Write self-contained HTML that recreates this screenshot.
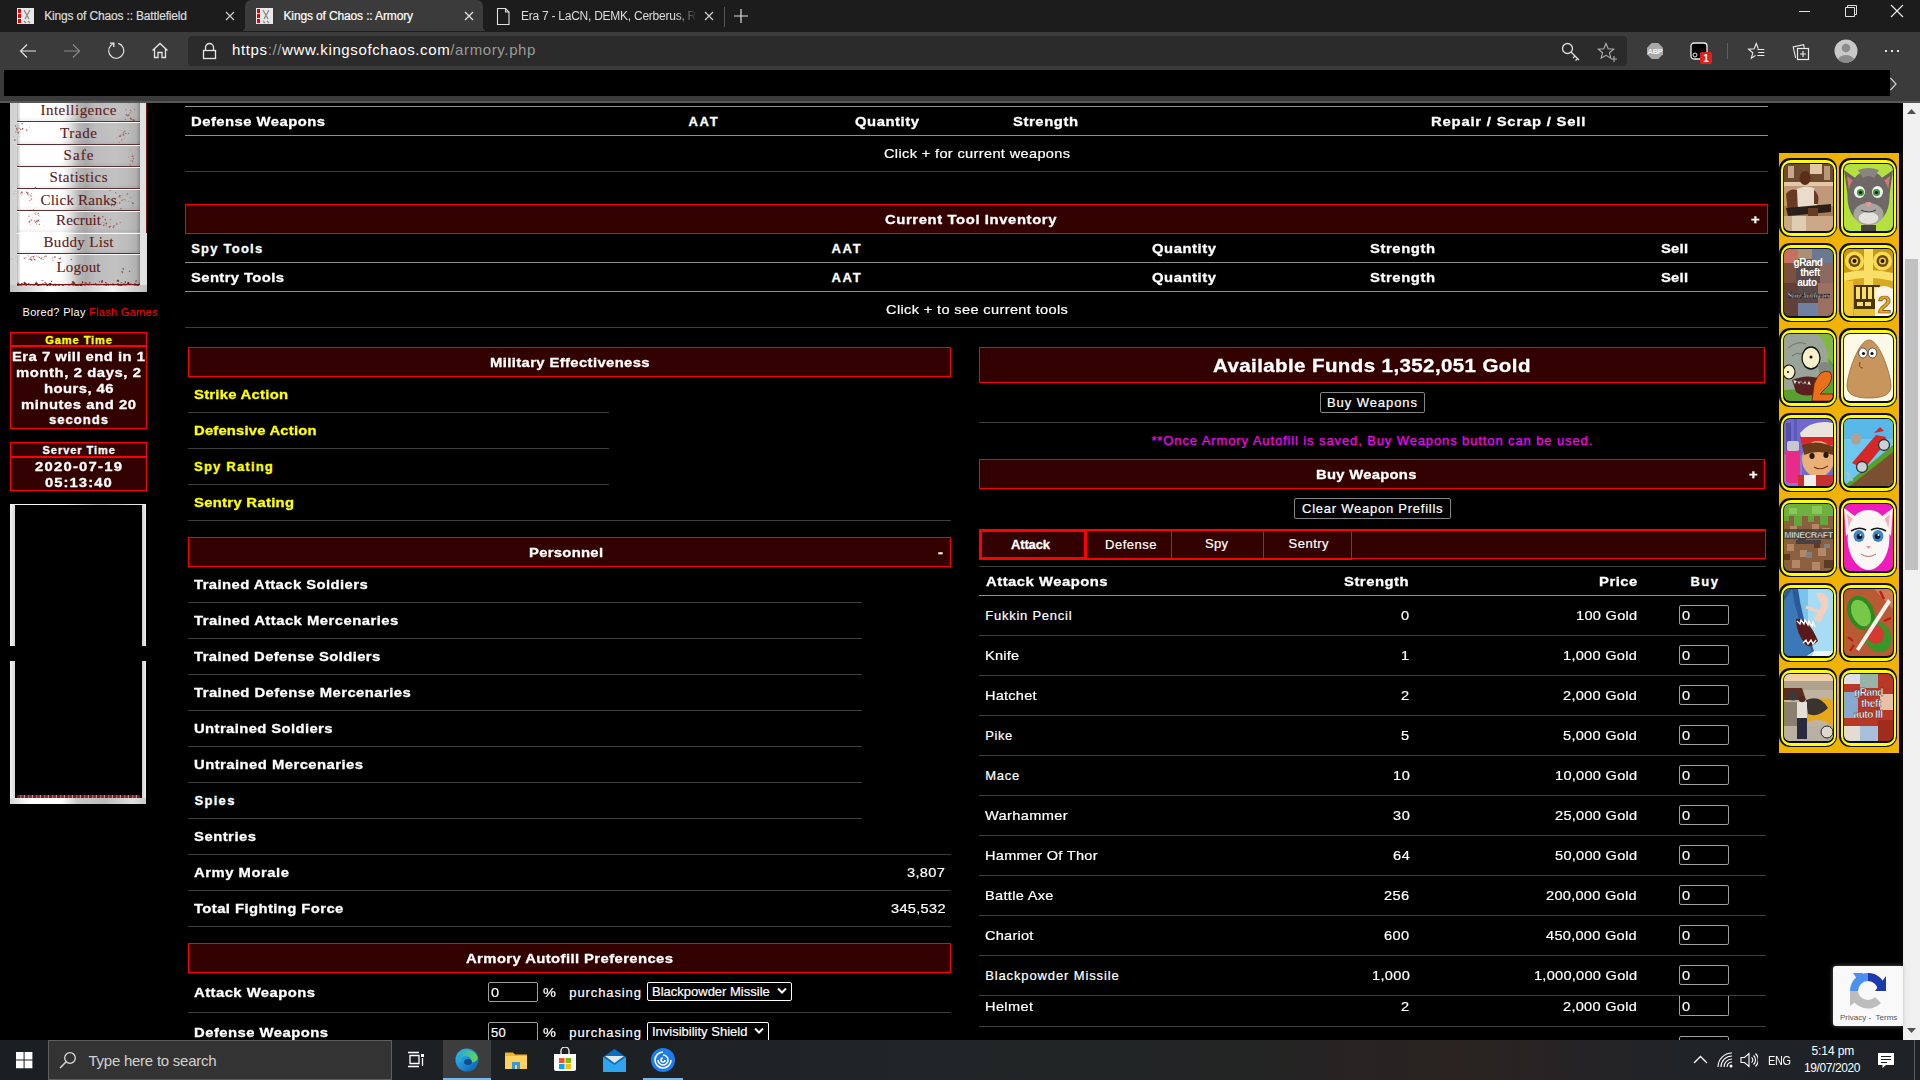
<!DOCTYPE html><html><head><meta charset="utf-8"><style>
html,body{margin:0;padding:0;width:1920px;height:1080px;overflow:hidden;background:#000}
body>div,body>svg{position:absolute}
body div div{position:absolute}
</style></head><body>
<div style="left:0px;top:103px;width:1903px;height:937px;background:#000"></div>
<div style="left:185px;top:106px;width:1583px;height:1px;background:#8f8f8f"></div>
<div style="left:191.0px;top:115px;font:bold 13px/13px 'Liberation Sans',sans-serif;color:#ffffff;letter-spacing:0.414px;white-space:nowrap;transform:scaleX(1.14);transform-origin:0 0;-webkit-text-stroke:0.3px #ffffff;">Defense Weapons</div>
<div style="left:688.4px;top:115px;font:bold 13px/13px 'Liberation Sans',sans-serif;color:#ffffff;letter-spacing:1.775px;white-space:nowrap;-webkit-text-stroke:0.3px #ffffff;">AAT</div>
<div style="left:855.4px;top:115px;font:bold 13px/13px 'Liberation Sans',sans-serif;color:#ffffff;letter-spacing:0.489px;white-space:nowrap;transform:scaleX(1.14);transform-origin:0 0;-webkit-text-stroke:0.3px #ffffff;">Quantity</div>
<div style="left:1013.1px;top:115px;font:bold 13px/13px 'Liberation Sans',sans-serif;color:#ffffff;letter-spacing:0.511px;white-space:nowrap;transform:scaleX(1.14);transform-origin:0 0;-webkit-text-stroke:0.3px #ffffff;">Strength</div>
<div style="left:1431.0px;top:115px;font:bold 13px/13px 'Liberation Sans',sans-serif;color:#ffffff;letter-spacing:0.702px;white-space:nowrap;transform:scaleX(1.14);transform-origin:0 0;-webkit-text-stroke:0.3px #ffffff;">Repair / Scrap / Sell</div>
<div style="left:185px;top:135px;width:1583px;height:1px;background:#8f8f8f"></div>
<div style="left:883.5px;top:147px;font:13px/13px 'Liberation Sans',sans-serif;color:#ffffff;letter-spacing:0.317px;white-space:nowrap;transform:scaleX(1.12);transform-origin:0 0;-webkit-text-stroke:0.2px #ffffff;">Click + for current weapons</div>
<div style="left:185px;top:171px;width:1583px;height:1px;background:#3f3f3f"></div>
<div style="left:185px;top:204px;width:1583px;height:30px;background:#330000;border:1px solid #ff0000;box-sizing:border-box"></div>
<div style="left:885.1px;top:213px;font:bold 13px/13px 'Liberation Sans',sans-serif;color:#ffffff;letter-spacing:0.534px;white-space:nowrap;transform:scaleX(1.14);transform-origin:0 0;-webkit-text-stroke:0.3px #ffffff;">Current Tool Inventory</div>
<div style="left:1751.0px;top:213px;font:bold 13px/13px 'Liberation Sans',sans-serif;color:#ffffff;letter-spacing:0.000px;white-space:nowrap;transform:scaleX(1.14);transform-origin:0 0;-webkit-text-stroke:0.3px #ffffff;">+</div>
<div style="left:191.2px;top:242px;font:bold 13px/13px 'Liberation Sans',sans-serif;color:#ffffff;letter-spacing:1.232px;white-space:nowrap;-webkit-text-stroke:0.3px #ffffff;">Spy Tools</div>
<div style="left:831.4px;top:242px;font:bold 13px/13px 'Liberation Sans',sans-serif;color:#ffffff;letter-spacing:1.775px;white-space:nowrap;-webkit-text-stroke:0.3px #ffffff;">AAT</div>
<div style="left:1151.7px;top:242px;font:bold 13px/13px 'Liberation Sans',sans-serif;color:#ffffff;letter-spacing:0.489px;white-space:nowrap;transform:scaleX(1.14);transform-origin:0 0;-webkit-text-stroke:0.3px #ffffff;">Quantity</div>
<div style="left:1369.6px;top:242px;font:bold 13px/13px 'Liberation Sans',sans-serif;color:#ffffff;letter-spacing:0.511px;white-space:nowrap;transform:scaleX(1.14);transform-origin:0 0;-webkit-text-stroke:0.3px #ffffff;">Strength</div>
<div style="left:1661.0px;top:242px;font:bold 13px/13px 'Liberation Sans',sans-serif;color:#ffffff;letter-spacing:0.186px;white-space:nowrap;transform:scaleX(1.14);transform-origin:0 0;-webkit-text-stroke:0.3px #ffffff;">Sell</div>
<div style="left:191.2px;top:271px;font:bold 13px/13px 'Liberation Sans',sans-serif;color:#ffffff;letter-spacing:0.347px;white-space:nowrap;transform:scaleX(1.14);transform-origin:0 0;-webkit-text-stroke:0.3px #ffffff;">Sentry Tools</div>
<div style="left:831.4px;top:271px;font:bold 13px/13px 'Liberation Sans',sans-serif;color:#ffffff;letter-spacing:1.775px;white-space:nowrap;-webkit-text-stroke:0.3px #ffffff;">AAT</div>
<div style="left:1151.7px;top:271px;font:bold 13px/13px 'Liberation Sans',sans-serif;color:#ffffff;letter-spacing:0.489px;white-space:nowrap;transform:scaleX(1.14);transform-origin:0 0;-webkit-text-stroke:0.3px #ffffff;">Quantity</div>
<div style="left:1369.6px;top:271px;font:bold 13px/13px 'Liberation Sans',sans-serif;color:#ffffff;letter-spacing:0.511px;white-space:nowrap;transform:scaleX(1.14);transform-origin:0 0;-webkit-text-stroke:0.3px #ffffff;">Strength</div>
<div style="left:1661.0px;top:271px;font:bold 13px/13px 'Liberation Sans',sans-serif;color:#ffffff;letter-spacing:0.186px;white-space:nowrap;transform:scaleX(1.14);transform-origin:0 0;-webkit-text-stroke:0.3px #ffffff;">Sell</div>
<div style="left:185px;top:262px;width:1583px;height:1px;background:#8f8f8f"></div>
<div style="left:185px;top:291px;width:1583px;height:1px;background:#8f8f8f"></div>
<div style="left:885.5px;top:303px;font:13px/13px 'Liberation Sans',sans-serif;color:#ffffff;letter-spacing:0.328px;white-space:nowrap;transform:scaleX(1.12);transform-origin:0 0;-webkit-text-stroke:0.2px #ffffff;">Click + to see current tools</div>
<div style="left:185px;top:327px;width:1583px;height:1px;background:#3f3f3f"></div>
<div style="left:188px;top:347px;width:763px;height:30px;background:#330000;border:1px solid #ff0000;box-sizing:border-box"></div>
<div style="left:489.8px;top:356px;font:bold 13px/13px 'Liberation Sans',sans-serif;color:#ffffff;letter-spacing:0.335px;white-space:nowrap;transform:scaleX(1.14);transform-origin:0 0;-webkit-text-stroke:0.3px #ffffff;">Military Effectiveness</div>
<div style="left:194.0px;top:388px;font:bold 13px/13px 'Liberation Sans',sans-serif;color:#ffff00;letter-spacing:0.229px;white-space:nowrap;transform:scaleX(1.14);transform-origin:0 0;-webkit-text-stroke:0.3px #ffff00;">Strike Action</div>
<div style="left:188px;top:412px;width:421px;height:1px;background:#3f3f3f"></div>
<div style="left:194.0px;top:424px;font:bold 13px/13px 'Liberation Sans',sans-serif;color:#ffff00;letter-spacing:0.164px;white-space:nowrap;transform:scaleX(1.14);transform-origin:0 0;-webkit-text-stroke:0.3px #ffff00;">Defensive Action</div>
<div style="left:188px;top:448px;width:421px;height:1px;background:#3f3f3f"></div>
<div style="left:194.0px;top:460px;font:bold 13px/13px 'Liberation Sans',sans-serif;color:#ffff00;letter-spacing:1.212px;white-space:nowrap;-webkit-text-stroke:0.3px #ffff00;">Spy Rating</div>
<div style="left:188px;top:484px;width:421px;height:1px;background:#3f3f3f"></div>
<div style="left:194.0px;top:496px;font:bold 13px/13px 'Liberation Sans',sans-serif;color:#ffff00;letter-spacing:0.267px;white-space:nowrap;transform:scaleX(1.14);transform-origin:0 0;-webkit-text-stroke:0.3px #ffff00;">Sentry Rating</div>
<div style="left:188px;top:520px;width:763px;height:1px;background:#3f3f3f"></div>
<div style="left:188px;top:537px;width:763px;height:30px;background:#330000;border:1px solid #ff0000;box-sizing:border-box"></div>
<div style="left:529.0px;top:546px;font:bold 13px/13px 'Liberation Sans',sans-serif;color:#ffffff;letter-spacing:0.257px;white-space:nowrap;transform:scaleX(1.14);transform-origin:0 0;-webkit-text-stroke:0.3px #ffffff;">Personnel</div>
<div style="left:937.5px;top:546px;font:bold 13px/13px 'Liberation Sans',sans-serif;color:#ffffff;letter-spacing:0.000px;white-space:nowrap;transform:scaleX(1.14);transform-origin:0 0;-webkit-text-stroke:0.3px #ffffff;">-</div>
<div style="left:194.4px;top:578px;font:bold 13px/13px 'Liberation Sans',sans-serif;color:#ffffff;letter-spacing:0.380px;white-space:nowrap;transform:scaleX(1.14);transform-origin:0 0;-webkit-text-stroke:0.3px #ffffff;">Trained Attack Soldiers</div>
<div style="left:188px;top:602px;width:674px;height:1px;background:#3f3f3f"></div>
<div style="left:194.4px;top:614px;font:bold 13px/13px 'Liberation Sans',sans-serif;color:#ffffff;letter-spacing:0.423px;white-space:nowrap;transform:scaleX(1.14);transform-origin:0 0;-webkit-text-stroke:0.3px #ffffff;">Trained Attack Mercenaries</div>
<div style="left:188px;top:638px;width:674px;height:1px;background:#3f3f3f"></div>
<div style="left:194.4px;top:650px;font:bold 13px/13px 'Liberation Sans',sans-serif;color:#ffffff;letter-spacing:0.351px;white-space:nowrap;transform:scaleX(1.14);transform-origin:0 0;-webkit-text-stroke:0.3px #ffffff;">Trained Defense Soldiers</div>
<div style="left:188px;top:674px;width:674px;height:1px;background:#3f3f3f"></div>
<div style="left:194.4px;top:686px;font:bold 13px/13px 'Liberation Sans',sans-serif;color:#ffffff;letter-spacing:0.390px;white-space:nowrap;transform:scaleX(1.14);transform-origin:0 0;-webkit-text-stroke:0.3px #ffffff;">Trained Defense Mercenaries</div>
<div style="left:188px;top:710px;width:674px;height:1px;background:#3f3f3f"></div>
<div style="left:194.4px;top:722px;font:bold 13px/13px 'Liberation Sans',sans-serif;color:#ffffff;letter-spacing:0.348px;white-space:nowrap;transform:scaleX(1.14);transform-origin:0 0;-webkit-text-stroke:0.3px #ffffff;">Untrained Soldiers</div>
<div style="left:188px;top:746px;width:674px;height:1px;background:#3f3f3f"></div>
<div style="left:194.4px;top:758px;font:bold 13px/13px 'Liberation Sans',sans-serif;color:#ffffff;letter-spacing:0.407px;white-space:nowrap;transform:scaleX(1.14);transform-origin:0 0;-webkit-text-stroke:0.3px #ffffff;">Untrained Mercenaries</div>
<div style="left:188px;top:782px;width:674px;height:1px;background:#3f3f3f"></div>
<div style="left:194.4px;top:794px;font:bold 13px/13px 'Liberation Sans',sans-serif;color:#ffffff;letter-spacing:1.328px;white-space:nowrap;-webkit-text-stroke:0.3px #ffffff;">Spies</div>
<div style="left:188px;top:818px;width:674px;height:1px;background:#3f3f3f"></div>
<div style="left:194.4px;top:830px;font:bold 13px/13px 'Liberation Sans',sans-serif;color:#ffffff;letter-spacing:0.439px;white-space:nowrap;transform:scaleX(1.14);transform-origin:0 0;-webkit-text-stroke:0.3px #ffffff;">Sentries</div>
<div style="left:188px;top:854px;width:763px;height:1px;background:#3f3f3f"></div>
<div style="left:194.4px;top:866px;font:bold 13px/13px 'Liberation Sans',sans-serif;color:#ffffff;letter-spacing:0.457px;white-space:nowrap;transform:scaleX(1.14);transform-origin:0 0;-webkit-text-stroke:0.3px #ffffff;">Army Morale</div>
<div style="left:188px;top:890px;width:763px;height:1px;background:#3f3f3f"></div>
<div style="left:194.4px;top:902px;font:bold 13px/13px 'Liberation Sans',sans-serif;color:#ffffff;letter-spacing:0.370px;white-space:nowrap;transform:scaleX(1.14);transform-origin:0 0;-webkit-text-stroke:0.3px #ffffff;">Total Fighting Force</div>
<div style="left:188px;top:926px;width:763px;height:1px;background:#3f3f3f"></div>
<div style="left:907.2px;top:866px;font:13px/13px 'Liberation Sans',sans-serif;color:#ffffff;letter-spacing:0.291px;white-space:nowrap;transform:scaleX(1.12);transform-origin:0 0;-webkit-text-stroke:0.2px #ffffff;">3,807</div>
<div style="left:890.5px;top:902px;font:13px/13px 'Liberation Sans',sans-serif;color:#ffffff;letter-spacing:0.280px;white-space:nowrap;transform:scaleX(1.12);transform-origin:0 0;-webkit-text-stroke:0.2px #ffffff;">345,532</div>
<div style="left:188px;top:943px;width:763px;height:30px;background:#330000;border:1px solid #ff0000;box-sizing:border-box"></div>
<div style="left:466.0px;top:952px;font:bold 13px/13px 'Liberation Sans',sans-serif;color:#ffffff;letter-spacing:0.361px;white-space:nowrap;transform:scaleX(1.14);transform-origin:0 0;-webkit-text-stroke:0.3px #ffffff;">Armory Autofill Preferences</div>
<div style="left:194.0px;top:986px;font:bold 13px/13px 'Liberation Sans',sans-serif;color:#ffffff;letter-spacing:0.403px;white-space:nowrap;transform:scaleX(1.14);transform-origin:0 0;-webkit-text-stroke:0.3px #ffffff;">Attack Weapons</div>
<div style="left:488px;top:982px;width:50px;height:20px;background:#000;border:1px solid #a0a0a0;border-radius:2px;box-sizing:border-box"></div>
<div style="left:491.0px;top:986px;font:13px/13px 'Liberation Sans',sans-serif;color:#ffffff;letter-spacing:0.000px;white-space:nowrap;transform:scaleX(1.12);transform-origin:0 0;-webkit-text-stroke:0.2px #ffffff;">0</div>
<div style="left:543.0px;top:986px;font:13px/13px 'Liberation Sans',sans-serif;color:#ffffff;letter-spacing:0.000px;white-space:nowrap;transform:scaleX(1.12);transform-origin:0 0;-webkit-text-stroke:0.2px #ffffff;">%</div>
<div style="left:569.3px;top:986px;font:13px/13px 'Liberation Sans',sans-serif;color:#ffffff;letter-spacing:0.897px;white-space:nowrap;-webkit-text-stroke:0.2px #ffffff;">purchasing</div>
<div style="left:647px;top:982px;width:145px;height:19px;background:#000;border:1px solid #fff;border-radius:2px;box-sizing:border-box"></div>
<div style="left:652.0px;top:985px;font:13px/13px 'Liberation Sans',sans-serif;color:#ffffff;letter-spacing:0.000px;white-space:nowrap;-webkit-text-stroke:0.2px #ffffff;">Blackpowder Missile</div>
<svg style="left:777px;top:987px" width="10" height="8"><path d="M1 1.5 L5 5.5 L9 1.5" stroke="#fff" stroke-width="2" fill="none"/></svg>
<div style="left:188px;top:1012px;width:763px;height:1px;background:#3f3f3f"></div>
<div style="left:194.0px;top:1026px;font:bold 13px/13px 'Liberation Sans',sans-serif;color:#ffffff;letter-spacing:0.414px;white-space:nowrap;transform:scaleX(1.14);transform-origin:0 0;-webkit-text-stroke:0.3px #ffffff;">Defense Weapons</div>
<div style="left:488px;top:1022px;width:50px;height:24px;background:#000;border:1px solid #a0a0a0;border-radius:2px;box-sizing:border-box"></div>
<div style="left:491.0px;top:1026px;font:13px/13px 'Liberation Sans',sans-serif;color:#ffffff;letter-spacing:0.289px;white-space:nowrap;-webkit-text-stroke:0.2px #ffffff;">50</div>
<div style="left:543.0px;top:1026px;font:13px/13px 'Liberation Sans',sans-serif;color:#ffffff;letter-spacing:0.000px;white-space:nowrap;transform:scaleX(1.12);transform-origin:0 0;-webkit-text-stroke:0.2px #ffffff;">%</div>
<div style="left:569.3px;top:1026px;font:13px/13px 'Liberation Sans',sans-serif;color:#ffffff;letter-spacing:0.897px;white-space:nowrap;-webkit-text-stroke:0.2px #ffffff;">purchasing</div>
<div style="left:647px;top:1022px;width:122px;height:30px;background:#000;border:1px solid #fff;border-radius:2px;box-sizing:border-box"></div>
<div style="left:652.0px;top:1025px;font:13px/13px 'Liberation Sans',sans-serif;color:#ffffff;letter-spacing:0.000px;white-space:nowrap;-webkit-text-stroke:0.2px #ffffff;">Invisibility Shield</div>
<svg style="left:754px;top:1027px" width="10" height="8"><path d="M1 1.5 L5 5.5 L9 1.5" stroke="#fff" stroke-width="2" fill="none"/></svg>
<div style="left:979px;top:347px;width:786px;height:36px;background:#330000;border:1px solid #ff0000;box-sizing:border-box"></div>
<div style="left:1213.3px;top:356.5px;font:bold 18px/18px 'Liberation Sans',sans-serif;color:#ffffff;letter-spacing:0.345px;white-space:nowrap;transform:scaleX(1.14);transform-origin:0 0;-webkit-text-stroke:0.3px #ffffff;">Available Funds 1,352,051 Gold</div>
<div style="left:1320px;top:392px;width:105px;height:21px;background:#000;border:1px solid #858585;border-radius:2px;box-sizing:border-box"></div>
<div style="left:1327.0px;top:396px;font:13px/13px 'Liberation Sans',sans-serif;color:#ffffff;letter-spacing:0.928px;white-space:nowrap;-webkit-text-stroke:0.2px #ffffff;">Buy Weapons</div>
<div style="left:979px;top:422px;width:786px;height:1px;background:#3f3f3f"></div>
<div style="left:1151.4px;top:434px;font:13px/13px 'Liberation Sans',sans-serif;color:#ff00ff;letter-spacing:0.889px;white-space:nowrap;-webkit-text-stroke:0.2px #ff00ff;">**Once Armory Autofill is saved, Buy Weapons button can be used.</div>
<div style="left:979px;top:459px;width:786px;height:30px;background:#330000;border:1px solid #ff0000;box-sizing:border-box"></div>
<div style="left:1316.0px;top:467.5px;font:bold 13px/13px 'Liberation Sans',sans-serif;color:#ffffff;letter-spacing:0.235px;white-space:nowrap;transform:scaleX(1.14);transform-origin:0 0;-webkit-text-stroke:0.3px #ffffff;">Buy Weapons</div>
<div style="left:1749.0px;top:467.5px;font:bold 13px/13px 'Liberation Sans',sans-serif;color:#ffffff;letter-spacing:0.000px;white-space:nowrap;transform:scaleX(1.14);transform-origin:0 0;-webkit-text-stroke:0.3px #ffffff;">+</div>
<div style="left:1294px;top:498px;width:157px;height:21px;background:#000;border:1px solid #858585;border-radius:2px;box-sizing:border-box"></div>
<div style="left:1302.0px;top:502px;font:13px/13px 'Liberation Sans',sans-serif;color:#ffffff;letter-spacing:0.754px;white-space:nowrap;-webkit-text-stroke:0.2px #ffffff;">Clear Weapon Prefills</div>
<div style="left:979px;top:529px;width:787px;height:30px;background:#330000;border:1px solid #ff0000;box-sizing:border-box"></div>
<div style="left:1086px;top:559px;width:266px;height:1px;background:#ff0000"></div>
<div style="left:979px;top:529px;width:108px;height:31px;border:3px solid #ff0000;box-sizing:border-box"></div>
<div style="left:1086px;top:530px;width:86px;height:30px;border-right:1px solid #ff0000;box-sizing:border-box"></div>
<div style="left:1171px;top:530px;width:93px;height:30px;border-right:1px solid #ff0000;box-sizing:border-box"></div>
<div style="left:1264px;top:530px;width:88px;height:30px;border-right:1px solid #ff0000;border-bottom:1px solid #ff0000;box-sizing:border-box"></div>
<div style="left:1086px;top:530px;width:680px;height:1px;background:#ff0000"></div>
<div style="left:1011.0px;top:538px;font:bold 13px/13px 'Liberation Sans',sans-serif;color:#ffffff;letter-spacing:-0.150px;white-space:nowrap;-webkit-text-stroke:0.3px #ffffff;">Attack</div>
<div style="left:1105.0px;top:538px;font:13px/13px 'Liberation Sans',sans-serif;color:#ffffff;letter-spacing:0.510px;white-space:nowrap;-webkit-text-stroke:0.2px #ffffff;">Defense</div>
<div style="left:1205.0px;top:537px;font:13px/13px 'Liberation Sans',sans-serif;color:#ffffff;letter-spacing:0.297px;white-space:nowrap;-webkit-text-stroke:0.2px #ffffff;">Spy</div>
<div style="left:1288.6px;top:537px;font:13px/13px 'Liberation Sans',sans-serif;color:#ffffff;letter-spacing:0.484px;white-space:nowrap;-webkit-text-stroke:0.2px #ffffff;">Sentry</div>
<div style="left:979px;top:566px;width:787px;height:1px;background:#3f3f3f"></div>
<div style="left:985.6px;top:575px;font:bold 13px/13px 'Liberation Sans',sans-serif;color:#ffffff;letter-spacing:0.443px;white-space:nowrap;transform:scaleX(1.14);transform-origin:0 0;-webkit-text-stroke:0.3px #ffffff;">Attack Weapons</div>
<div style="left:1343.8px;top:575px;font:bold 13px/13px 'Liberation Sans',sans-serif;color:#ffffff;letter-spacing:0.461px;white-space:nowrap;transform:scaleX(1.14);transform-origin:0 0;-webkit-text-stroke:0.3px #ffffff;">Strength</div>
<div style="left:1598.7px;top:575px;font:bold 13px/13px 'Liberation Sans',sans-serif;color:#ffffff;letter-spacing:0.453px;white-space:nowrap;transform:scaleX(1.14);transform-origin:0 0;-webkit-text-stroke:0.3px #ffffff;">Price</div>
<div style="left:1690.5px;top:575px;font:bold 13px/13px 'Liberation Sans',sans-serif;color:#ffffff;letter-spacing:1.469px;white-space:nowrap;-webkit-text-stroke:0.3px #ffffff;">Buy</div>
<div style="left:979px;top:595px;width:787px;height:1px;background:#8f8f8f"></div>
<div style="left:985.2px;top:609px;font:13px/13px 'Liberation Sans',sans-serif;color:#ffffff;letter-spacing:0.764px;white-space:nowrap;-webkit-text-stroke:0.2px #ffffff;">Fukkin Pencil</div>
<div style="left:1401.0px;top:609px;font:13px/13px 'Liberation Sans',sans-serif;color:#ffffff;letter-spacing:0.000px;white-space:nowrap;transform:scaleX(1.12);transform-origin:0 0;-webkit-text-stroke:0.2px #ffffff;">0</div>
<div style="left:1575.8px;top:609px;font:13px/13px 'Liberation Sans',sans-serif;color:#ffffff;letter-spacing:0.269px;white-space:nowrap;transform:scaleX(1.12);transform-origin:0 0;-webkit-text-stroke:0.2px #ffffff;">100 Gold</div>
<div style="left:1679px;top:605px;width:50px;height:20px;background:#000;border:1px solid #a0a0a0;border-radius:2px;box-sizing:border-box"></div>
<div style="left:1682.0px;top:609px;font:13px/13px 'Liberation Sans',sans-serif;color:#ffffff;letter-spacing:0.000px;white-space:nowrap;transform:scaleX(1.12);transform-origin:0 0;-webkit-text-stroke:0.2px #ffffff;">0</div>
<div style="left:979px;top:635px;width:787px;height:1px;background:#3f3f3f"></div>
<div style="left:985.2px;top:649px;font:13px/13px 'Liberation Sans',sans-serif;color:#ffffff;letter-spacing:0.179px;white-space:nowrap;transform:scaleX(1.12);transform-origin:0 0;-webkit-text-stroke:0.2px #ffffff;">Knife</div>
<div style="left:1401.0px;top:649px;font:13px/13px 'Liberation Sans',sans-serif;color:#ffffff;letter-spacing:0.000px;white-space:nowrap;transform:scaleX(1.12);transform-origin:0 0;-webkit-text-stroke:0.2px #ffffff;">1</div>
<div style="left:1563.2px;top:649px;font:13px/13px 'Liberation Sans',sans-serif;color:#ffffff;letter-spacing:0.252px;white-space:nowrap;transform:scaleX(1.12);transform-origin:0 0;-webkit-text-stroke:0.2px #ffffff;">1,000 Gold</div>
<div style="left:1679px;top:645px;width:50px;height:20px;background:#000;border:1px solid #a0a0a0;border-radius:2px;box-sizing:border-box"></div>
<div style="left:1682.0px;top:649px;font:13px/13px 'Liberation Sans',sans-serif;color:#ffffff;letter-spacing:0.000px;white-space:nowrap;transform:scaleX(1.12);transform-origin:0 0;-webkit-text-stroke:0.2px #ffffff;">0</div>
<div style="left:979px;top:675px;width:787px;height:1px;background:#3f3f3f"></div>
<div style="left:985.2px;top:689px;font:13px/13px 'Liberation Sans',sans-serif;color:#ffffff;letter-spacing:0.195px;white-space:nowrap;transform:scaleX(1.12);transform-origin:0 0;-webkit-text-stroke:0.2px #ffffff;">Hatchet</div>
<div style="left:1401.0px;top:689px;font:13px/13px 'Liberation Sans',sans-serif;color:#ffffff;letter-spacing:0.000px;white-space:nowrap;transform:scaleX(1.12);transform-origin:0 0;-webkit-text-stroke:0.2px #ffffff;">2</div>
<div style="left:1563.2px;top:689px;font:13px/13px 'Liberation Sans',sans-serif;color:#ffffff;letter-spacing:0.252px;white-space:nowrap;transform:scaleX(1.12);transform-origin:0 0;-webkit-text-stroke:0.2px #ffffff;">2,000 Gold</div>
<div style="left:1679px;top:685px;width:50px;height:20px;background:#000;border:1px solid #a0a0a0;border-radius:2px;box-sizing:border-box"></div>
<div style="left:1682.0px;top:689px;font:13px/13px 'Liberation Sans',sans-serif;color:#ffffff;letter-spacing:0.000px;white-space:nowrap;transform:scaleX(1.12);transform-origin:0 0;-webkit-text-stroke:0.2px #ffffff;">0</div>
<div style="left:979px;top:715px;width:787px;height:1px;background:#3f3f3f"></div>
<div style="left:985.2px;top:729px;font:13px/13px 'Liberation Sans',sans-serif;color:#ffffff;letter-spacing:0.568px;white-space:nowrap;-webkit-text-stroke:0.2px #ffffff;">Pike</div>
<div style="left:1401.0px;top:729px;font:13px/13px 'Liberation Sans',sans-serif;color:#ffffff;letter-spacing:0.000px;white-space:nowrap;transform:scaleX(1.12);transform-origin:0 0;-webkit-text-stroke:0.2px #ffffff;">5</div>
<div style="left:1563.2px;top:729px;font:13px/13px 'Liberation Sans',sans-serif;color:#ffffff;letter-spacing:0.252px;white-space:nowrap;transform:scaleX(1.12);transform-origin:0 0;-webkit-text-stroke:0.2px #ffffff;">5,000 Gold</div>
<div style="left:1679px;top:725px;width:50px;height:20px;background:#000;border:1px solid #a0a0a0;border-radius:2px;box-sizing:border-box"></div>
<div style="left:1682.0px;top:729px;font:13px/13px 'Liberation Sans',sans-serif;color:#ffffff;letter-spacing:0.000px;white-space:nowrap;transform:scaleX(1.12);transform-origin:0 0;-webkit-text-stroke:0.2px #ffffff;">0</div>
<div style="left:979px;top:755px;width:787px;height:1px;background:#3f3f3f"></div>
<div style="left:985.2px;top:769px;font:13px/13px 'Liberation Sans',sans-serif;color:#ffffff;letter-spacing:0.734px;white-space:nowrap;-webkit-text-stroke:0.2px #ffffff;">Mace</div>
<div style="left:1392.6px;top:769px;font:13px/13px 'Liberation Sans',sans-serif;color:#ffffff;letter-spacing:0.517px;white-space:nowrap;transform:scaleX(1.12);transform-origin:0 0;-webkit-text-stroke:0.2px #ffffff;">10</div>
<div style="left:1554.8px;top:769px;font:13px/13px 'Liberation Sans',sans-serif;color:#ffffff;letter-spacing:0.253px;white-space:nowrap;transform:scaleX(1.12);transform-origin:0 0;-webkit-text-stroke:0.2px #ffffff;">10,000 Gold</div>
<div style="left:1679px;top:765px;width:50px;height:20px;background:#000;border:1px solid #a0a0a0;border-radius:2px;box-sizing:border-box"></div>
<div style="left:1682.0px;top:769px;font:13px/13px 'Liberation Sans',sans-serif;color:#ffffff;letter-spacing:0.000px;white-space:nowrap;transform:scaleX(1.12);transform-origin:0 0;-webkit-text-stroke:0.2px #ffffff;">0</div>
<div style="left:979px;top:795px;width:787px;height:1px;background:#3f3f3f"></div>
<div style="left:985.2px;top:809px;font:13px/13px 'Liberation Sans',sans-serif;color:#ffffff;letter-spacing:0.329px;white-space:nowrap;transform:scaleX(1.12);transform-origin:0 0;-webkit-text-stroke:0.2px #ffffff;">Warhammer</div>
<div style="left:1392.6px;top:809px;font:13px/13px 'Liberation Sans',sans-serif;color:#ffffff;letter-spacing:0.517px;white-space:nowrap;transform:scaleX(1.12);transform-origin:0 0;-webkit-text-stroke:0.2px #ffffff;">30</div>
<div style="left:1554.8px;top:809px;font:13px/13px 'Liberation Sans',sans-serif;color:#ffffff;letter-spacing:0.253px;white-space:nowrap;transform:scaleX(1.12);transform-origin:0 0;-webkit-text-stroke:0.2px #ffffff;">25,000 Gold</div>
<div style="left:1679px;top:805px;width:50px;height:20px;background:#000;border:1px solid #a0a0a0;border-radius:2px;box-sizing:border-box"></div>
<div style="left:1682.0px;top:809px;font:13px/13px 'Liberation Sans',sans-serif;color:#ffffff;letter-spacing:0.000px;white-space:nowrap;transform:scaleX(1.12);transform-origin:0 0;-webkit-text-stroke:0.2px #ffffff;">0</div>
<div style="left:979px;top:835px;width:787px;height:1px;background:#3f3f3f"></div>
<div style="left:985.2px;top:849px;font:13px/13px 'Liberation Sans',sans-serif;color:#ffffff;letter-spacing:0.243px;white-space:nowrap;transform:scaleX(1.12);transform-origin:0 0;-webkit-text-stroke:0.2px #ffffff;">Hammer Of Thor</div>
<div style="left:1392.6px;top:849px;font:13px/13px 'Liberation Sans',sans-serif;color:#ffffff;letter-spacing:0.517px;white-space:nowrap;transform:scaleX(1.12);transform-origin:0 0;-webkit-text-stroke:0.2px #ffffff;">64</div>
<div style="left:1554.8px;top:849px;font:13px/13px 'Liberation Sans',sans-serif;color:#ffffff;letter-spacing:0.253px;white-space:nowrap;transform:scaleX(1.12);transform-origin:0 0;-webkit-text-stroke:0.2px #ffffff;">50,000 Gold</div>
<div style="left:1679px;top:845px;width:50px;height:20px;background:#000;border:1px solid #a0a0a0;border-radius:2px;box-sizing:border-box"></div>
<div style="left:1682.0px;top:849px;font:13px/13px 'Liberation Sans',sans-serif;color:#ffffff;letter-spacing:0.000px;white-space:nowrap;transform:scaleX(1.12);transform-origin:0 0;-webkit-text-stroke:0.2px #ffffff;">0</div>
<div style="left:979px;top:875px;width:787px;height:1px;background:#3f3f3f"></div>
<div style="left:985.2px;top:889px;font:13px/13px 'Liberation Sans',sans-serif;color:#ffffff;letter-spacing:0.281px;white-space:nowrap;transform:scaleX(1.12);transform-origin:0 0;-webkit-text-stroke:0.2px #ffffff;">Battle Axe</div>
<div style="left:1384.2px;top:889px;font:13px/13px 'Liberation Sans',sans-serif;color:#ffffff;letter-spacing:0.388px;white-space:nowrap;transform:scaleX(1.12);transform-origin:0 0;-webkit-text-stroke:0.2px #ffffff;">256</div>
<div style="left:1546.4px;top:889px;font:13px/13px 'Liberation Sans',sans-serif;color:#ffffff;letter-spacing:0.254px;white-space:nowrap;transform:scaleX(1.12);transform-origin:0 0;-webkit-text-stroke:0.2px #ffffff;">200,000 Gold</div>
<div style="left:1679px;top:885px;width:50px;height:20px;background:#000;border:1px solid #a0a0a0;border-radius:2px;box-sizing:border-box"></div>
<div style="left:1682.0px;top:889px;font:13px/13px 'Liberation Sans',sans-serif;color:#ffffff;letter-spacing:0.000px;white-space:nowrap;transform:scaleX(1.12);transform-origin:0 0;-webkit-text-stroke:0.2px #ffffff;">0</div>
<div style="left:979px;top:915px;width:787px;height:1px;background:#3f3f3f"></div>
<div style="left:985.2px;top:929px;font:13px/13px 'Liberation Sans',sans-serif;color:#ffffff;letter-spacing:0.215px;white-space:nowrap;transform:scaleX(1.12);transform-origin:0 0;-webkit-text-stroke:0.2px #ffffff;">Chariot</div>
<div style="left:1384.2px;top:929px;font:13px/13px 'Liberation Sans',sans-serif;color:#ffffff;letter-spacing:0.388px;white-space:nowrap;transform:scaleX(1.12);transform-origin:0 0;-webkit-text-stroke:0.2px #ffffff;">600</div>
<div style="left:1546.4px;top:929px;font:13px/13px 'Liberation Sans',sans-serif;color:#ffffff;letter-spacing:0.254px;white-space:nowrap;transform:scaleX(1.12);transform-origin:0 0;-webkit-text-stroke:0.2px #ffffff;">450,000 Gold</div>
<div style="left:1679px;top:925px;width:50px;height:20px;background:#000;border:1px solid #a0a0a0;border-radius:2px;box-sizing:border-box"></div>
<div style="left:1682.0px;top:929px;font:13px/13px 'Liberation Sans',sans-serif;color:#ffffff;letter-spacing:0.000px;white-space:nowrap;transform:scaleX(1.12);transform-origin:0 0;-webkit-text-stroke:0.2px #ffffff;">0</div>
<div style="left:979px;top:955px;width:787px;height:1px;background:#3f3f3f"></div>
<div style="left:985.2px;top:969px;font:13px/13px 'Liberation Sans',sans-serif;color:#ffffff;letter-spacing:0.872px;white-space:nowrap;-webkit-text-stroke:0.2px #ffffff;">Blackpowder Missile</div>
<div style="left:1371.6px;top:969px;font:13px/13px 'Liberation Sans',sans-serif;color:#ffffff;letter-spacing:0.291px;white-space:nowrap;transform:scaleX(1.12);transform-origin:0 0;-webkit-text-stroke:0.2px #ffffff;">1,000</div>
<div style="left:1533.8px;top:969px;font:13px/13px 'Liberation Sans',sans-serif;color:#ffffff;letter-spacing:0.244px;white-space:nowrap;transform:scaleX(1.12);transform-origin:0 0;-webkit-text-stroke:0.2px #ffffff;">1,000,000 Gold</div>
<div style="left:1679px;top:965px;width:50px;height:20px;background:#000;border:1px solid #a0a0a0;border-radius:2px;box-sizing:border-box"></div>
<div style="left:1682.0px;top:969px;font:13px/13px 'Liberation Sans',sans-serif;color:#ffffff;letter-spacing:0.000px;white-space:nowrap;transform:scaleX(1.12);transform-origin:0 0;-webkit-text-stroke:0.2px #ffffff;">0</div>
<div style="left:979px;top:995px;width:787px;height:1px;background:#3f3f3f"></div>
<div style="left:979px;top:996px;width:787px;height:30px;overflow:hidden">
</div>
<div style="left:985.2px;top:1000px;font:13px/13px 'Liberation Sans',sans-serif;color:#ffffff;letter-spacing:0.334px;white-space:nowrap;transform:scaleX(1.12);transform-origin:0 0;-webkit-text-stroke:0.2px #ffffff;">Helmet</div>
<div style="left:1401.0px;top:1000px;font:13px/13px 'Liberation Sans',sans-serif;color:#ffffff;letter-spacing:0.000px;white-space:nowrap;transform:scaleX(1.12);transform-origin:0 0;-webkit-text-stroke:0.2px #ffffff;">2</div>
<div style="left:1563.2px;top:1000px;font:13px/13px 'Liberation Sans',sans-serif;color:#ffffff;letter-spacing:0.252px;white-space:nowrap;transform:scaleX(1.12);transform-origin:0 0;-webkit-text-stroke:0.2px #ffffff;">2,000 Gold</div>
<div style="left:1679px;top:996px;width:50px;height:20px;border:1px solid #a0a0a0;border-top:none;border-radius:0 0 2px 2px;box-sizing:border-box"></div>
<div style="left:1682.0px;top:1000px;font:13px/13px 'Liberation Sans',sans-serif;color:#ffffff;letter-spacing:0.000px;white-space:nowrap;transform:scaleX(1.12);transform-origin:0 0;-webkit-text-stroke:0.2px #ffffff;">0</div>
<div style="left:979px;top:1026px;width:787px;height:1px;background:#3f3f3f"></div>
<div style="left:1679px;top:1036px;width:50px;height:10px;border:1px solid #a0a0a0;border-radius:2px;box-sizing:border-box"></div>
<div style="left:10px;top:103px;width:137px;height:189px;background:linear-gradient(90deg,#d0d0d0 0%,#f8f8f8 40%,#e0e0e0 100%)"></div>
<div style="left:17px;top:103px;width:123px;height:183px;background:linear-gradient(90deg,#b8b8b8 0%,#ffffff 3%,#ffffff 36%,#e4e4e4 43%,#b8b8b8 50%,#acacac 56%,#bdbdbd 64%,#c2c2c2 80%,#bcbcbc 90%,#b0b0b0 97%,#8a8a8a 100%)"></div>
<div style="left:10px;top:285px;width:137px;height:7px;background:linear-gradient(90deg,#c0c0c0,#ffffff 30%,#d0d0d0 55%,#f5f5f5 75%,#bdbdbd)"></div>
<svg style="left:17px;top:279px" width="123" height="7"><rect x="39.8" y="5.3" width="1.7" height="0.9" fill="#7a1414" opacity="0.77"/><rect x="45.0" y="5.4" width="1.5" height="0.8" fill="#7a1414" opacity="0.72"/><rect x="8.6" y="5.4" width="1.4" height="1.6" fill="#7a1414" opacity="0.56"/><rect x="27.5" y="4.4" width="2.1" height="1.4" fill="#7a1414" opacity="0.70"/><rect x="120.1" y="5.4" width="2.0" height="1.1" fill="#7a1414" opacity="0.57"/><rect x="14.5" y="5.1" width="1.9" height="1.0" fill="#7a1414" opacity="0.79"/><rect x="78.6" y="5.0" width="1.6" height="0.9" fill="#7a1414" opacity="0.53"/><rect x="25.3" y="4.2" width="1.4" height="1.1" fill="#7a1414" opacity="0.79"/><rect x="55.7" y="5.1" width="1.9" height="1.5" fill="#7a1414" opacity="0.62"/><rect x="70.7" y="4.7" width="2.0" height="1.5" fill="#7a1414" opacity="0.64"/><rect x="120.6" y="5.4" width="1.4" height="1.6" fill="#7a1414" opacity="0.58"/><rect x="60.1" y="5.5" width="1.7" height="1.6" fill="#7a1414" opacity="0.79"/><rect x="107.7" y="5.1" width="1.8" height="1.4" fill="#7a1414" opacity="0.79"/><rect x="56.1" y="3.5" width="2.1" height="1.3" fill="#7a1414" opacity="0.83"/><rect x="7.5" y="4.2" width="1.7" height="1.8" fill="#7a1414" opacity="0.91"/><rect x="35.0" y="5.0" width="1.7" height="0.8" fill="#7a1414" opacity="0.73"/><rect x="20.7" y="5.4" width="0.9" height="1.6" fill="#7a1414" opacity="0.56"/><rect x="30.5" y="4.9" width="2.0" height="0.9" fill="#7a1414" opacity="0.72"/><rect x="67.6" y="3.1" width="1.9" height="1.7" fill="#7a1414" opacity="0.64"/><rect x="51.1" y="5.0" width="2.0" height="1.8" fill="#7a1414" opacity="0.58"/><rect x="21.7" y="5.2" width="1.1" height="1.3" fill="#7a1414" opacity="0.79"/><rect x="32.3" y="5.5" width="1.4" height="1.2" fill="#7a1414" opacity="0.78"/><rect x="117.2" y="4.2" width="1.5" height="1.4" fill="#7a1414" opacity="0.84"/><rect x="6.6" y="2.9" width="1.9" height="1.7" fill="#7a1414" opacity="0.90"/><rect x="48.3" y="4.9" width="0.9" height="1.4" fill="#7a1414" opacity="0.53"/><rect x="8.3" y="5.2" width="1.0" height="1.1" fill="#7a1414" opacity="0.53"/><rect x="0.0" y="5.3" width="0.9" height="1.2" fill="#7a1414" opacity="0.51"/><rect x="107.5" y="4.4" width="1.0" height="1.1" fill="#7a1414" opacity="0.67"/><rect x="44.8" y="5.4" width="2.0" height="1.8" fill="#7a1414" opacity="0.73"/><rect x="59.5" y="5.4" width="0.9" height="1.1" fill="#7a1414" opacity="0.63"/><rect x="101.9" y="5.3" width="0.8" height="1.8" fill="#7a1414" opacity="0.76"/><rect x="18.0" y="4.6" width="0.8" height="1.3" fill="#7a1414" opacity="0.99"/><rect x="106.2" y="4.2" width="1.2" height="1.2" fill="#7a1414" opacity="0.58"/><rect x="94.9" y="4.7" width="1.9" height="1.1" fill="#7a1414" opacity="0.61"/><rect x="99.8" y="0.8" width="2.0" height="1.6" fill="#7a1414" opacity="0.91"/><rect x="91.0" y="5.2" width="1.5" height="1.2" fill="#7a1414" opacity="0.51"/><rect x="3.4" y="5.1" width="1.2" height="1.5" fill="#7a1414" opacity="0.98"/><rect x="55.0" y="2.4" width="2.2" height="1.8" fill="#7a1414" opacity="0.68"/><rect x="27.1" y="5.2" width="1.1" height="1.0" fill="#7a1414" opacity="0.81"/><rect x="110.7" y="3.5" width="1.5" height="1.5" fill="#7a1414" opacity="0.90"/><rect x="10.4" y="4.3" width="2.1" height="1.6" fill="#7a1414" opacity="0.88"/><rect x="58.8" y="5.3" width="1.9" height="1.1" fill="#7a1414" opacity="0.90"/><rect x="119.5" y="4.9" width="1.4" height="1.7" fill="#7a1414" opacity="0.86"/><rect x="20.9" y="5.3" width="1.0" height="1.7" fill="#7a1414" opacity="0.90"/><rect x="18.0" y="3.6" width="2.2" height="1.5" fill="#7a1414" opacity="0.68"/><rect x="67.5" y="5.3" width="0.8" height="1.8" fill="#7a1414" opacity="0.82"/><rect x="64.8" y="2.5" width="1.4" height="1.7" fill="#7a1414" opacity="0.91"/><rect x="26.0" y="5.2" width="1.2" height="1.0" fill="#7a1414" opacity="0.79"/><rect x="31.9" y="4.9" width="1.0" height="1.7" fill="#7a1414" opacity="0.68"/><rect x="56.4" y="4.5" width="2.1" height="1.2" fill="#7a1414" opacity="0.96"/><rect x="61.7" y="4.7" width="1.5" height="0.8" fill="#7a1414" opacity="0.72"/><rect x="22.5" y="5.5" width="1.9" height="1.0" fill="#7a1414" opacity="0.74"/><rect x="89.2" y="4.6" width="1.3" height="1.3" fill="#7a1414" opacity="0.78"/><rect x="96.5" y="5.4" width="1.6" height="1.0" fill="#7a1414" opacity="0.64"/><rect x="95.0" y="4.7" width="1.6" height="1.6" fill="#7a1414" opacity="0.96"/><rect x="54.5" y="4.4" width="1.5" height="1.3" fill="#7a1414" opacity="0.85"/><rect x="55.6" y="4.7" width="1.5" height="1.7" fill="#7a1414" opacity="0.85"/><rect x="107.8" y="2.3" width="1.2" height="1.4" fill="#7a1414" opacity="0.97"/><rect x="103.3" y="5.3" width="1.0" height="1.2" fill="#7a1414" opacity="0.54"/><rect x="29.6" y="5.4" width="1.7" height="1.6" fill="#7a1414" opacity="0.95"/><rect x="19.0" y="4.1" width="1.7" height="0.9" fill="#7a1414" opacity="0.94"/><rect x="119.0" y="5.2" width="2.1" height="1.2" fill="#7a1414" opacity="0.74"/><rect x="121.8" y="3.5" width="1.0" height="1.2" fill="#7a1414" opacity="0.76"/><rect x="41.7" y="5.3" width="1.2" height="1.5" fill="#7a1414" opacity="0.51"/><rect x="68.1" y="4.9" width="0.8" height="1.1" fill="#7a1414" opacity="0.81"/><rect x="63.0" y="5.4" width="2.2" height="1.6" fill="#7a1414" opacity="0.99"/><rect x="12.9" y="5.2" width="0.9" height="1.6" fill="#7a1414" opacity="0.64"/><rect x="15.9" y="4.9" width="2.1" height="1.6" fill="#7a1414" opacity="0.63"/><rect x="18.4" y="2.7" width="1.6" height="1.5" fill="#7a1414" opacity="0.54"/><rect x="7.1" y="4.2" width="1.4" height="0.9" fill="#7a1414" opacity="0.97"/><rect x="78.0" y="3.7" width="0.9" height="1.7" fill="#7a1414" opacity="0.53"/><rect x="106.1" y="4.8" width="1.3" height="1.4" fill="#7a1414" opacity="0.96"/><rect x="32.9" y="5.3" width="1.5" height="1.0" fill="#7a1414" opacity="0.55"/><rect x="19.9" y="5.4" width="1.1" height="1.1" fill="#7a1414" opacity="0.65"/><rect x="93.4" y="5.1" width="1.5" height="1.0" fill="#7a1414" opacity="0.67"/><rect x="2.2" y="5.2" width="0.8" height="1.5" fill="#7a1414" opacity="0.78"/><rect x="23.3" y="4.8" width="2.1" height="0.9" fill="#7a1414" opacity="0.91"/><rect x="53.2" y="4.7" width="2.0" height="1.2" fill="#7a1414" opacity="0.75"/><rect x="84.6" y="1.0" width="1.3" height="1.6" fill="#7a1414" opacity="0.85"/><rect x="78.2" y="4.9" width="1.3" height="0.9" fill="#7a1414" opacity="0.56"/><rect x="8.7" y="4.0" width="1.2" height="1.0" fill="#7a1414" opacity="0.54"/><rect x="103.5" y="3.2" width="1.7" height="1.1" fill="#7a1414" opacity="0.62"/><rect x="36.0" y="4.8" width="1.0" height="1.2" fill="#7a1414" opacity="0.63"/><rect x="118.3" y="1.5" width="1.6" height="1.0" fill="#7a1414" opacity="0.98"/><rect x="38.1" y="5.0" width="0.8" height="1.2" fill="#7a1414" opacity="0.74"/><rect x="61.8" y="5.3" width="1.5" height="0.8" fill="#7a1414" opacity="0.63"/><rect x="11.0" y="4.9" width="0.9" height="0.8" fill="#7a1414" opacity="0.65"/><rect x="28.6" y="4.5" width="1.5" height="1.6" fill="#7a1414" opacity="0.83"/><rect x="88.1" y="3.2" width="1.3" height="1.1" fill="#7a1414" opacity="0.99"/><rect x="18.4" y="4.1" width="1.7" height="0.8" fill="#7a1414" opacity="0.92"/><rect x="109.7" y="4.4" width="1.8" height="1.6" fill="#7a1414" opacity="0.57"/><rect x="64.4" y="4.7" width="2.0" height="1.6" fill="#7a1414" opacity="0.91"/><rect x="71.8" y="3.0" width="1.8" height="1.5" fill="#7a1414" opacity="0.61"/><rect x="3.8" y="5.3" width="1.3" height="0.9" fill="#7a1414" opacity="0.92"/><rect x="68.7" y="4.4" width="1.7" height="1.5" fill="#7a1414" opacity="0.74"/><rect x="0.4" y="3.7" width="1.8" height="1.3" fill="#7a1414" opacity="0.77"/><rect x="81.1" y="5.4" width="1.8" height="1.1" fill="#7a1414" opacity="0.54"/><rect x="32.7" y="4.0" width="1.1" height="1.5" fill="#7a1414" opacity="0.99"/><rect x="60.8" y="5.0" width="1.5" height="1.5" fill="#7a1414" opacity="0.88"/><rect x="75.9" y="4.4" width="0.9" height="0.9" fill="#7a1414" opacity="0.63"/><rect x="91.4" y="5.1" width="1.6" height="0.8" fill="#7a1414" opacity="0.53"/><rect x="33.1" y="4.3" width="1.8" height="1.5" fill="#7a1414" opacity="0.65"/><rect x="63.5" y="4.8" width="1.5" height="0.9" fill="#7a1414" opacity="0.95"/><rect x="24.5" y="1.3" width="2.1" height="0.8" fill="#7a1414" opacity="0.73"/><rect x="100.8" y="1.7" width="1.4" height="1.1" fill="#7a1414" opacity="0.60"/><rect x="116.3" y="5.2" width="1.6" height="0.9" fill="#7a1414" opacity="0.76"/><rect x="117.2" y="5.3" width="1.9" height="1.3" fill="#7a1414" opacity="0.94"/><rect x="86.5" y="5.2" width="2.1" height="1.3" fill="#7a1414" opacity="0.51"/><rect x="0.4" y="4.7" width="1.4" height="1.1" fill="#7a1414" opacity="0.57"/><rect x="42.3" y="5.1" width="2.0" height="0.8" fill="#7a1414" opacity="0.88"/><rect x="103.2" y="5.4" width="2.1" height="1.5" fill="#7a1414" opacity="0.95"/><rect x="35.6" y="5.0" width="1.4" height="1.8" fill="#7a1414" opacity="0.79"/><rect x="44.4" y="4.9" width="1.2" height="0.8" fill="#7a1414" opacity="0.55"/><rect x="102.7" y="5.1" width="2.1" height="1.0" fill="#7a1414" opacity="0.63"/><rect x="62.8" y="5.3" width="1.3" height="1.8" fill="#7a1414" opacity="0.94"/><rect x="99.9" y="4.4" width="2.1" height="1.7" fill="#7a1414" opacity="0.77"/><rect x="88.5" y="5.4" width="1.8" height="1.3" fill="#7a1414" opacity="0.88"/><rect x="79.3" y="5.1" width="0.9" height="1.7" fill="#7a1414" opacity="0.56"/><rect x="58.1" y="5.0" width="1.2" height="1.5" fill="#7a1414" opacity="0.99"/><rect x="32.0" y="4.3" width="1.2" height="1.4" fill="#7a1414" opacity="0.70"/><rect x="20.6" y="5.3" width="1.1" height="1.7" fill="#7a1414" opacity="0.75"/><rect x="27.1" y="2.9" width="2.2" height="1.2" fill="#7a1414" opacity="0.57"/><rect x="23.7" y="5.4" width="1.3" height="0.9" fill="#7a1414" opacity="0.62"/><rect x="31.8" y="4.6" width="2.0" height="1.5" fill="#7a1414" opacity="0.71"/><rect x="50.9" y="4.7" width="1.3" height="1.1" fill="#7a1414" opacity="0.53"/><rect x="34.1" y="1.7" width="1.0" height="1.3" fill="#7a1414" opacity="0.81"/><rect x="106.1" y="5.2" width="1.2" height="1.0" fill="#7a1414" opacity="0.70"/><rect x="54.8" y="2.1" width="2.0" height="1.7" fill="#7a1414" opacity="0.51"/><rect x="4.0" y="4.1" width="2.1" height="1.3" fill="#7a1414" opacity="0.79"/><rect x="0.0" y="4.9" width="2.1" height="1.6" fill="#7a1414" opacity="0.93"/><rect x="119.6" y="5.2" width="1.0" height="1.0" fill="#7a1414" opacity="0.76"/><rect x="83.9" y="2.3" width="1.8" height="1.4" fill="#7a1414" opacity="0.88"/><rect x="56.3" y="4.6" width="0.9" height="1.6" fill="#7a1414" opacity="0.62"/><rect x="113.2" y="4.3" width="1.2" height="0.9" fill="#7a1414" opacity="0.63"/><rect x="78.3" y="4.2" width="1.0" height="0.9" fill="#7a1414" opacity="0.76"/><rect x="71.7" y="5.0" width="1.1" height="1.4" fill="#7a1414" opacity="0.51"/><rect x="37.1" y="4.8" width="2.1" height="1.4" fill="#7a1414" opacity="0.94"/><rect x="58.5" y="5.2" width="1.1" height="1.8" fill="#7a1414" opacity="0.85"/><rect x="37.8" y="5.5" width="1.5" height="1.5" fill="#7a1414" opacity="0.71"/><rect x="31.6" y="4.3" width="2.1" height="1.0" fill="#7a1414" opacity="0.52"/><rect x="41.6" y="4.9" width="1.8" height="1.0" fill="#7a1414" opacity="0.90"/><rect x="90.9" y="4.7" width="1.1" height="1.8" fill="#7a1414" opacity="0.66"/><rect x="100.9" y="5.2" width="1.1" height="1.6" fill="#7a1414" opacity="0.65"/><rect x="117.1" y="4.7" width="1.1" height="1.0" fill="#7a1414" opacity="0.71"/><rect x="81.8" y="2.2" width="1.0" height="1.2" fill="#7a1414" opacity="0.61"/><rect x="119.8" y="5.3" width="0.9" height="0.9" fill="#7a1414" opacity="0.70"/><rect x="110.5" y="3.1" width="1.8" height="1.8" fill="#7a1414" opacity="0.97"/><rect x="40.5" y="5.3" width="2.1" height="1.5" fill="#7a1414" opacity="0.52"/><rect x="81.7" y="5.0" width="1.3" height="1.1" fill="#7a1414" opacity="0.58"/><rect x="0.4" y="5.1" width="1.3" height="1.8" fill="#7a1414" opacity="0.56"/><rect x="0" y="5" width="123" height="1.2" fill="#7a1414"/></svg>
<svg style="left:10px;top:103px" width="137" height="189"><circle cx="12.7" cy="26.4" r="0.51" fill="#8a3030" opacity="0.71"/><circle cx="11.9" cy="23.2" r="0.33" fill="#8a3030" opacity="0.54"/><circle cx="3.7" cy="33.4" r="0.42" fill="#8a3030" opacity="0.48"/><circle cx="10.8" cy="26.4" r="0.55" fill="#8a3030" opacity="0.71"/><circle cx="10.1" cy="25.9" r="0.32" fill="#8a3030" opacity="0.33"/><circle cx="12.7" cy="25.5" r="0.75" fill="#8a3030" opacity="0.75"/><circle cx="8.3" cy="29.7" r="0.87" fill="#8a3030" opacity="0.61"/><circle cx="9.5" cy="33.3" r="0.49" fill="#8a3030" opacity="0.44"/><circle cx="16.7" cy="27.2" r="0.85" fill="#8a3030" opacity="0.62"/><circle cx="10.8" cy="26.7" r="0.44" fill="#8a3030" opacity="0.54"/><circle cx="19.6" cy="24.3" r="0.53" fill="#8a3030" opacity="0.43"/><circle cx="5.8" cy="29.0" r="0.86" fill="#8a3030" opacity="0.39"/><circle cx="12.1" cy="20.8" r="0.79" fill="#8a3030" opacity="0.69"/><circle cx="7.2" cy="24.8" r="0.49" fill="#8a3030" opacity="0.48"/><circle cx="10.3" cy="25.4" r="0.42" fill="#8a3030" opacity="0.68"/><circle cx="10.0" cy="28.5" r="0.32" fill="#8a3030" opacity="0.58"/><circle cx="4.9" cy="37.0" r="0.83" fill="#8a3030" opacity="0.79"/><circle cx="9.8" cy="28.7" r="0.36" fill="#8a3030" opacity="0.55"/><circle cx="8.9" cy="22.8" r="0.44" fill="#8a3030" opacity="0.51"/><circle cx="5.6" cy="22.9" r="0.75" fill="#8a3030" opacity="0.72"/><circle cx="9.0" cy="25.3" r="0.80" fill="#8a3030" opacity="0.45"/><circle cx="6.5" cy="25.4" r="0.74" fill="#8a3030" opacity="0.40"/><circle cx="10.0" cy="30.0" r="0.39" fill="#8a3030" opacity="0.74"/><circle cx="6.9" cy="25.3" r="0.54" fill="#8a3030" opacity="0.80"/><circle cx="7.1" cy="26.9" r="0.79" fill="#8a3030" opacity="0.63"/><circle cx="113.4" cy="29.9" r="0.58" fill="#8a3030" opacity="0.71"/><circle cx="115.6" cy="22.5" r="0.32" fill="#8a3030" opacity="0.45"/><circle cx="113.4" cy="31.8" r="0.88" fill="#8a3030" opacity="0.59"/><circle cx="114.6" cy="28.4" r="0.82" fill="#8a3030" opacity="0.52"/><circle cx="111.7" cy="36.9" r="0.87" fill="#8a3030" opacity="0.35"/><circle cx="108.6" cy="26.8" r="0.43" fill="#8a3030" opacity="0.48"/><circle cx="113.3" cy="32.1" r="0.45" fill="#8a3030" opacity="0.60"/><circle cx="110.8" cy="27.8" r="0.31" fill="#8a3030" opacity="0.46"/><circle cx="111.2" cy="27.7" r="0.49" fill="#8a3030" opacity="0.40"/><circle cx="113.1" cy="25.2" r="0.34" fill="#8a3030" opacity="0.35"/><circle cx="109.0" cy="33.1" r="0.68" fill="#8a3030" opacity="0.35"/><circle cx="114.4" cy="35.3" r="0.55" fill="#8a3030" opacity="0.44"/><circle cx="109.4" cy="39.3" r="0.49" fill="#8a3030" opacity="0.58"/><circle cx="110.1" cy="33.2" r="0.82" fill="#8a3030" opacity="0.80"/><circle cx="110.7" cy="32.0" r="0.74" fill="#8a3030" opacity="0.40"/><circle cx="118.5" cy="30.3" r="0.55" fill="#8a3030" opacity="0.71"/><circle cx="106.8" cy="34.6" r="0.58" fill="#8a3030" opacity="0.38"/><circle cx="115.8" cy="30.5" r="0.68" fill="#8a3030" opacity="0.75"/><circle cx="124.7" cy="17.2" r="0.52" fill="#8a3030" opacity="0.55"/><circle cx="122.0" cy="16.5" r="0.61" fill="#8a3030" opacity="0.76"/><circle cx="123.6" cy="17.1" r="0.78" fill="#8a3030" opacity="0.78"/><circle cx="120.7" cy="15.4" r="0.87" fill="#8a3030" opacity="0.79"/><circle cx="118.7" cy="12.3" r="0.86" fill="#8a3030" opacity="0.49"/><circle cx="124.6" cy="6.5" r="0.79" fill="#8a3030" opacity="0.38"/><circle cx="120.6" cy="7.2" r="0.54" fill="#8a3030" opacity="0.72"/><circle cx="121.2" cy="8.1" r="0.43" fill="#8a3030" opacity="0.50"/><circle cx="116.1" cy="11.2" r="0.37" fill="#8a3030" opacity="0.42"/><circle cx="118.7" cy="-2.7" r="0.32" fill="#8a3030" opacity="0.58"/><circle cx="120.1" cy="10.1" r="0.80" fill="#8a3030" opacity="0.36"/><circle cx="115.9" cy="6.8" r="0.68" fill="#8a3030" opacity="0.45"/><circle cx="115.4" cy="16.5" r="0.56" fill="#8a3030" opacity="0.63"/><circle cx="115.9" cy="14.5" r="0.31" fill="#8a3030" opacity="0.61"/><circle cx="117.1" cy="12.3" r="0.76" fill="#8a3030" opacity="0.69"/><circle cx="117.6" cy="13.1" r="0.58" fill="#8a3030" opacity="0.35"/><circle cx="122.9" cy="17.4" r="0.36" fill="#8a3030" opacity="0.52"/><circle cx="118.8" cy="11.9" r="0.68" fill="#8a3030" opacity="0.34"/><circle cx="119.3" cy="-0.1" r="0.61" fill="#8a3030" opacity="0.33"/><circle cx="116.1" cy="11.8" r="0.87" fill="#8a3030" opacity="0.37"/><circle cx="25.4" cy="84.5" r="0.74" fill="#8a3030" opacity="0.71"/><circle cx="19.9" cy="97.6" r="0.60" fill="#8a3030" opacity="0.78"/><circle cx="17.6" cy="90.2" r="0.77" fill="#8a3030" opacity="0.77"/><circle cx="19.3" cy="91.9" r="0.75" fill="#8a3030" opacity="0.38"/><circle cx="18.2" cy="89.8" r="0.79" fill="#8a3030" opacity="0.37"/><circle cx="3.8" cy="90.9" r="0.42" fill="#8a3030" opacity="0.43"/><circle cx="10.6" cy="90.9" r="0.32" fill="#8a3030" opacity="0.39"/><circle cx="21.2" cy="96.0" r="0.71" fill="#8a3030" opacity="0.75"/><circle cx="19.3" cy="94.8" r="0.37" fill="#8a3030" opacity="0.57"/><circle cx="11.9" cy="89.2" r="0.82" fill="#8a3030" opacity="0.58"/><circle cx="5.9" cy="88.5" r="0.36" fill="#8a3030" opacity="0.80"/><circle cx="11.6" cy="89.2" r="0.78" fill="#8a3030" opacity="0.43"/><circle cx="21.6" cy="90.8" r="0.52" fill="#8a3030" opacity="0.68"/><circle cx="12.1" cy="91.6" r="0.75" fill="#8a3030" opacity="0.32"/><circle cx="16.6" cy="89.3" r="0.68" fill="#8a3030" opacity="0.79"/><circle cx="8.7" cy="89.1" r="0.49" fill="#8a3030" opacity="0.30"/><circle cx="17.8" cy="91.3" r="0.67" fill="#8a3030" opacity="0.52"/><circle cx="4.4" cy="90.6" r="0.38" fill="#8a3030" opacity="0.41"/><circle cx="14.4" cy="90.6" r="0.30" fill="#8a3030" opacity="0.48"/><circle cx="18.7" cy="92.5" r="0.43" fill="#8a3030" opacity="0.59"/><circle cx="12.1" cy="90.1" r="0.67" fill="#8a3030" opacity="0.54"/><circle cx="22.8" cy="95.4" r="0.45" fill="#8a3030" opacity="0.37"/><circle cx="20.9" cy="93.0" r="0.82" fill="#8a3030" opacity="0.69"/><circle cx="11.8" cy="92.1" r="0.31" fill="#8a3030" opacity="0.62"/><circle cx="10.7" cy="90.1" r="0.69" fill="#8a3030" opacity="0.52"/><circle cx="120.5" cy="94.5" r="0.45" fill="#8a3030" opacity="0.75"/><circle cx="118.3" cy="98.3" r="0.54" fill="#8a3030" opacity="0.42"/><circle cx="121.4" cy="99.5" r="0.31" fill="#8a3030" opacity="0.58"/><circle cx="113.6" cy="96.2" r="0.42" fill="#8a3030" opacity="0.60"/><circle cx="100.0" cy="96.7" r="0.79" fill="#8a3030" opacity="0.39"/><circle cx="107.8" cy="100.1" r="0.33" fill="#8a3030" opacity="0.74"/><circle cx="112.3" cy="90.8" r="0.30" fill="#8a3030" opacity="0.72"/><circle cx="109.8" cy="92.5" r="0.75" fill="#8a3030" opacity="0.53"/><circle cx="110.5" cy="98.9" r="0.44" fill="#8a3030" opacity="0.32"/><circle cx="104.0" cy="102.7" r="0.72" fill="#8a3030" opacity="0.72"/><circle cx="108.7" cy="93.9" r="0.63" fill="#8a3030" opacity="0.52"/><circle cx="112.0" cy="92.3" r="0.46" fill="#8a3030" opacity="0.62"/><circle cx="114.8" cy="96.4" r="0.83" fill="#8a3030" opacity="0.31"/><circle cx="109.7" cy="99.9" r="0.75" fill="#8a3030" opacity="0.77"/><circle cx="109.8" cy="93.4" r="0.83" fill="#8a3030" opacity="0.46"/><circle cx="111.0" cy="105.7" r="0.68" fill="#8a3030" opacity="0.65"/><circle cx="100.1" cy="87.4" r="0.58" fill="#8a3030" opacity="0.72"/><circle cx="105.5" cy="89.5" r="0.56" fill="#8a3030" opacity="0.66"/><circle cx="104.6" cy="95.5" r="0.43" fill="#8a3030" opacity="0.61"/><circle cx="123.6" cy="101.1" r="0.39" fill="#8a3030" opacity="0.31"/><circle cx="122.6" cy="102.7" r="0.51" fill="#8a3030" opacity="0.37"/><circle cx="112.0" cy="97.2" r="0.72" fill="#8a3030" opacity="0.62"/><circle cx="106.3" cy="90.8" r="0.34" fill="#8a3030" opacity="0.60"/><circle cx="101.6" cy="102.6" r="0.79" fill="#8a3030" opacity="0.75"/><circle cx="122.9" cy="100.2" r="0.85" fill="#8a3030" opacity="0.77"/><circle cx="113.7" cy="98.7" r="0.37" fill="#8a3030" opacity="0.32"/><circle cx="117.4" cy="91.0" r="0.68" fill="#8a3030" opacity="0.71"/><circle cx="106.1" cy="94.6" r="0.36" fill="#8a3030" opacity="0.35"/><circle cx="110.2" cy="94.3" r="0.49" fill="#8a3030" opacity="0.51"/><circle cx="115.3" cy="97.4" r="0.47" fill="#8a3030" opacity="0.66"/><circle cx="105.8" cy="99.6" r="0.88" fill="#8a3030" opacity="0.55"/><circle cx="115.8" cy="92.5" r="0.32" fill="#8a3030" opacity="0.51"/><circle cx="98.9" cy="99.7" r="0.51" fill="#8a3030" opacity="0.65"/><circle cx="105.2" cy="96.3" r="0.82" fill="#8a3030" opacity="0.35"/><circle cx="111.8" cy="94.8" r="0.30" fill="#8a3030" opacity="0.40"/><circle cx="25.8" cy="104.0" r="0.30" fill="#8a3030" opacity="0.55"/><circle cx="17.9" cy="115.4" r="0.41" fill="#8a3030" opacity="0.55"/><circle cx="20.7" cy="121.2" r="0.46" fill="#8a3030" opacity="0.77"/><circle cx="24.4" cy="117.7" r="0.72" fill="#8a3030" opacity="0.55"/><circle cx="29.4" cy="118.6" r="0.35" fill="#8a3030" opacity="0.69"/><circle cx="22.7" cy="108.4" r="0.68" fill="#8a3030" opacity="0.48"/><circle cx="21.7" cy="117.3" r="0.83" fill="#8a3030" opacity="0.34"/><circle cx="25.7" cy="114.4" r="0.42" fill="#8a3030" opacity="0.43"/><circle cx="28.8" cy="112.3" r="0.53" fill="#8a3030" opacity="0.74"/><circle cx="25.5" cy="119.4" r="0.62" fill="#8a3030" opacity="0.68"/><circle cx="25.1" cy="109.2" r="0.51" fill="#8a3030" opacity="0.46"/><circle cx="29.3" cy="121.4" r="0.70" fill="#8a3030" opacity="0.67"/><circle cx="27.1" cy="118.8" r="0.76" fill="#8a3030" opacity="0.59"/><circle cx="28.1" cy="118.2" r="0.83" fill="#8a3030" opacity="0.42"/><circle cx="26.2" cy="118.2" r="0.72" fill="#8a3030" opacity="0.72"/><circle cx="26.3" cy="116.9" r="0.45" fill="#8a3030" opacity="0.46"/><circle cx="22.7" cy="114.7" r="0.50" fill="#8a3030" opacity="0.39"/><circle cx="31.4" cy="114.0" r="0.36" fill="#8a3030" opacity="0.78"/><circle cx="28.2" cy="117.3" r="0.89" fill="#8a3030" opacity="0.70"/><circle cx="24.6" cy="110.7" r="0.42" fill="#8a3030" opacity="0.62"/><circle cx="27.1" cy="116.7" r="0.53" fill="#8a3030" opacity="0.32"/><circle cx="19.3" cy="119.2" r="0.72" fill="#8a3030" opacity="0.55"/><circle cx="22.0" cy="111.7" r="0.39" fill="#8a3030" opacity="0.60"/><circle cx="19.6" cy="118.7" r="0.84" fill="#8a3030" opacity="0.52"/><circle cx="19.1" cy="112.0" r="0.55" fill="#8a3030" opacity="0.41"/><circle cx="23.6" cy="106.9" r="0.76" fill="#8a3030" opacity="0.65"/><circle cx="28.6" cy="110.2" r="0.68" fill="#8a3030" opacity="0.53"/><circle cx="22.8" cy="120.2" r="0.36" fill="#8a3030" opacity="0.51"/><circle cx="26.3" cy="108.8" r="0.68" fill="#8a3030" opacity="0.43"/><circle cx="21.1" cy="117.0" r="0.67" fill="#8a3030" opacity="0.50"/><circle cx="20.8" cy="106.8" r="0.41" fill="#8a3030" opacity="0.63"/><circle cx="25.7" cy="111.1" r="0.59" fill="#8a3030" opacity="0.79"/><circle cx="29.9" cy="116.2" r="0.40" fill="#8a3030" opacity="0.69"/><circle cx="29.5" cy="113.2" r="0.36" fill="#8a3030" opacity="0.59"/><circle cx="18.9" cy="113.4" r="0.61" fill="#8a3030" opacity="0.62"/><circle cx="27.3" cy="110.7" r="0.55" fill="#8a3030" opacity="0.77"/><circle cx="26.5" cy="120.9" r="0.54" fill="#8a3030" opacity="0.68"/><circle cx="33.3" cy="123.0" r="0.51" fill="#8a3030" opacity="0.33"/><circle cx="24.4" cy="119.0" r="0.31" fill="#8a3030" opacity="0.51"/><circle cx="19.6" cy="118.0" r="0.51" fill="#8a3030" opacity="0.43"/><circle cx="99.3" cy="123.9" r="0.86" fill="#8a3030" opacity="0.56"/><circle cx="99.7" cy="124.3" r="0.54" fill="#8a3030" opacity="0.41"/><circle cx="104.0" cy="122.8" r="0.79" fill="#8a3030" opacity="0.62"/><circle cx="91.7" cy="119.7" r="0.44" fill="#8a3030" opacity="0.78"/><circle cx="93.7" cy="122.4" r="0.79" fill="#8a3030" opacity="0.71"/><circle cx="93.9" cy="119.5" r="0.63" fill="#8a3030" opacity="0.36"/><circle cx="100.4" cy="116.6" r="0.81" fill="#8a3030" opacity="0.43"/><circle cx="95.3" cy="120.6" r="0.56" fill="#8a3030" opacity="0.39"/><circle cx="106.0" cy="119.1" r="0.47" fill="#8a3030" opacity="0.42"/><circle cx="96.2" cy="122.2" r="0.56" fill="#8a3030" opacity="0.62"/><circle cx="95.4" cy="116.6" r="0.86" fill="#8a3030" opacity="0.73"/><circle cx="106.8" cy="121.0" r="0.84" fill="#8a3030" opacity="0.69"/><circle cx="104.0" cy="123.4" r="0.68" fill="#8a3030" opacity="0.31"/><circle cx="110.3" cy="119.5" r="0.69" fill="#8a3030" opacity="0.43"/><circle cx="100.2" cy="120.0" r="0.44" fill="#8a3030" opacity="0.69"/><circle cx="96.4" cy="120.4" r="0.84" fill="#8a3030" opacity="0.70"/><circle cx="103.2" cy="124.5" r="0.67" fill="#8a3030" opacity="0.69"/><circle cx="92.8" cy="113.5" r="0.77" fill="#8a3030" opacity="0.72"/><circle cx="100.5" cy="123.4" r="0.62" fill="#8a3030" opacity="0.67"/><circle cx="88.4" cy="121.3" r="0.63" fill="#8a3030" opacity="0.43"/><circle cx="30.7" cy="155.8" r="0.60" fill="#8a3030" opacity="0.33"/><circle cx="23.2" cy="155.2" r="0.59" fill="#8a3030" opacity="0.55"/><circle cx="5.8" cy="154.3" r="0.30" fill="#8a3030" opacity="0.72"/><circle cx="14.3" cy="155.4" r="0.70" fill="#8a3030" opacity="0.72"/><circle cx="20.8" cy="156.1" r="0.88" fill="#8a3030" opacity="0.34"/><circle cx="18.4" cy="153.4" r="0.32" fill="#8a3030" opacity="0.60"/><circle cx="18.1" cy="151.8" r="0.50" fill="#8a3030" opacity="0.79"/><circle cx="15.6" cy="154.9" r="0.84" fill="#8a3030" opacity="0.32"/><circle cx="26.5" cy="152.9" r="0.50" fill="#8a3030" opacity="0.73"/><circle cx="20.5" cy="156.3" r="0.62" fill="#8a3030" opacity="0.69"/><circle cx="33.3" cy="156.6" r="0.55" fill="#8a3030" opacity="0.58"/><circle cx="34.8" cy="153.9" r="0.80" fill="#8a3030" opacity="0.50"/><circle cx="20.0" cy="155.0" r="0.60" fill="#8a3030" opacity="0.79"/><circle cx="17.5" cy="152.8" r="0.50" fill="#8a3030" opacity="0.46"/><circle cx="24.9" cy="156.9" r="0.68" fill="#8a3030" opacity="0.69"/><circle cx="49.4" cy="155.6" r="0.83" fill="#8a3030" opacity="0.57"/><circle cx="40.1" cy="155.4" r="0.30" fill="#8a3030" opacity="0.39"/><circle cx="45.1" cy="154.0" r="0.69" fill="#8a3030" opacity="0.69"/><circle cx="44.5" cy="153.9" r="0.67" fill="#8a3030" opacity="0.61"/><circle cx="24.4" cy="153.1" r="0.71" fill="#8a3030" opacity="0.41"/><circle cx="23.1" cy="153.6" r="0.76" fill="#8a3030" opacity="0.35"/><circle cx="31.4" cy="155.4" r="0.76" fill="#8a3030" opacity="0.76"/><circle cx="23.3" cy="153.8" r="0.79" fill="#8a3030" opacity="0.69"/><circle cx="21.1" cy="154.6" r="0.48" fill="#8a3030" opacity="0.51"/><circle cx="24.5" cy="156.4" r="0.69" fill="#8a3030" opacity="0.77"/><circle cx="45.2" cy="155.7" r="0.32" fill="#8a3030" opacity="0.36"/><circle cx="36.1" cy="153.2" r="0.85" fill="#8a3030" opacity="0.52"/><circle cx="42.3" cy="155.1" r="0.66" fill="#8a3030" opacity="0.77"/><circle cx="44.1" cy="154.8" r="0.55" fill="#8a3030" opacity="0.35"/><circle cx="24.7" cy="154.2" r="0.39" fill="#8a3030" opacity="0.31"/><circle cx="49.0" cy="155.1" r="0.37" fill="#8a3030" opacity="0.78"/><circle cx="51.5" cy="156.6" r="0.38" fill="#8a3030" opacity="0.31"/><circle cx="28.2" cy="153.9" r="0.74" fill="#8a3030" opacity="0.39"/><circle cx="50.5" cy="155.8" r="0.73" fill="#8a3030" opacity="0.73"/><circle cx="29.3" cy="154.4" r="0.68" fill="#8a3030" opacity="0.65"/><circle cx="1.9" cy="155.9" r="0.45" fill="#8a3030" opacity="0.78"/><circle cx="29.6" cy="154.8" r="0.31" fill="#8a3030" opacity="0.63"/><circle cx="32.1" cy="154.4" r="0.49" fill="#8a3030" opacity="0.66"/><circle cx="42.5" cy="157.6" r="0.59" fill="#8a3030" opacity="0.33"/><circle cx="19.0" cy="156.5" r="0.56" fill="#8a3030" opacity="0.64"/><circle cx="43.7" cy="157.1" r="0.52" fill="#8a3030" opacity="0.62"/><circle cx="21.1" cy="153.9" r="0.53" fill="#8a3030" opacity="0.69"/><circle cx="50.6" cy="154.1" r="0.64" fill="#8a3030" opacity="0.45"/><circle cx="61.3" cy="156.5" r="0.72" fill="#8a3030" opacity="0.71"/><circle cx="21.6" cy="156.8" r="0.89" fill="#8a3030" opacity="0.72"/><circle cx="113.3" cy="165.7" r="0.56" fill="#8a3030" opacity="0.74"/><circle cx="112.3" cy="169.7" r="0.66" fill="#8a3030" opacity="0.75"/><circle cx="115.7" cy="165.1" r="0.30" fill="#8a3030" opacity="0.43"/><circle cx="112.1" cy="168.6" r="0.79" fill="#8a3030" opacity="0.74"/><circle cx="119.6" cy="168.2" r="0.79" fill="#8a3030" opacity="0.73"/><circle cx="113.2" cy="166.1" r="0.81" fill="#8a3030" opacity="0.70"/><circle cx="120.2" cy="46.9" r="0.51" fill="#8a3030" opacity="0.34"/><circle cx="118.6" cy="54.0" r="0.42" fill="#8a3030" opacity="0.68"/><circle cx="123.3" cy="55.5" r="0.66" fill="#8a3030" opacity="0.64"/><circle cx="120.7" cy="57.7" r="0.45" fill="#8a3030" opacity="0.68"/><circle cx="122.6" cy="51.6" r="0.35" fill="#8a3030" opacity="0.70"/><circle cx="122.2" cy="53.4" r="0.65" fill="#8a3030" opacity="0.75"/><circle cx="123.8" cy="53.0" r="0.59" fill="#8a3030" opacity="0.59"/><circle cx="122.5" cy="60.0" r="0.41" fill="#8a3030" opacity="0.65"/><circle cx="120.3" cy="61.9" r="0.54" fill="#8a3030" opacity="0.56"/><circle cx="122.4" cy="58.2" r="0.90" fill="#8a3030" opacity="0.49"/></svg>
<div style="left:17px;top:121px;width:123px;height:1px;background:#5a3030"></div>
<div style="left:17px;top:122px;width:123px;height:1px;background:rgba(255,255,255,0.9)"></div>
<div style="left:17px;top:117px;width:123px;height:4px;background:linear-gradient(180deg,rgba(0,0,0,0),rgba(0,0,0,0.06))"></div>
<div style="left:17px;top:144px;width:123px;height:1px;background:#5a3030"></div>
<div style="left:17px;top:145px;width:123px;height:1px;background:rgba(255,255,255,0.9)"></div>
<div style="left:17px;top:140px;width:123px;height:4px;background:linear-gradient(180deg,rgba(0,0,0,0),rgba(0,0,0,0.06))"></div>
<div style="left:17px;top:166px;width:123px;height:1px;background:#5a3030"></div>
<div style="left:17px;top:167px;width:123px;height:1px;background:rgba(255,255,255,0.9)"></div>
<div style="left:17px;top:162px;width:123px;height:4px;background:linear-gradient(180deg,rgba(0,0,0,0),rgba(0,0,0,0.06))"></div>
<div style="left:17px;top:188px;width:123px;height:1px;background:#5a3030"></div>
<div style="left:17px;top:189px;width:123px;height:1px;background:rgba(255,255,255,0.9)"></div>
<div style="left:17px;top:184px;width:123px;height:4px;background:linear-gradient(180deg,rgba(0,0,0,0),rgba(0,0,0,0.06))"></div>
<div style="left:17px;top:210px;width:123px;height:1px;background:#5a3030"></div>
<div style="left:17px;top:211px;width:123px;height:1px;background:rgba(255,255,255,0.9)"></div>
<div style="left:17px;top:206px;width:123px;height:4px;background:linear-gradient(180deg,rgba(0,0,0,0),rgba(0,0,0,0.06))"></div>
<div style="left:17px;top:233px;width:123px;height:1px;background:rgba(255,255,255,0.9)"></div>
<div style="left:17px;top:228px;width:123px;height:4px;background:linear-gradient(180deg,rgba(0,0,0,0),rgba(0,0,0,0.06))"></div>
<div style="left:17px;top:253px;width:123px;height:1px;background:#5a3030"></div>
<div style="left:17px;top:254px;width:123px;height:1px;background:rgba(255,255,255,0.9)"></div>
<div style="left:17px;top:249px;width:123px;height:4px;background:linear-gradient(180deg,rgba(0,0,0,0),rgba(0,0,0,0.06))"></div>
<div style="left:146px;top:103px;width:1px;height:130px;background:#6a1a1a"></div>
<div style="left:40.5px;top:103px;font:15px/15px 'Liberation Serif',serif;color:#5c1c1c;letter-spacing:0.472px;white-space:nowrap;-webkit-text-stroke:0.12px #5c1c1c">Intelligence</div>
<div style="left:60.0px;top:126px;font:15px/15px 'Liberation Serif',serif;color:#5c1c1c;letter-spacing:0.641px;white-space:nowrap;-webkit-text-stroke:0.12px #5c1c1c">Trade</div>
<div style="left:63.5px;top:148px;font:15px/15px 'Liberation Serif',serif;color:#5c1c1c;letter-spacing:1.115px;white-space:nowrap;-webkit-text-stroke:0.12px #5c1c1c">Safe</div>
<div style="left:49.5px;top:170px;font:15px/15px 'Liberation Serif',serif;color:#5c1c1c;letter-spacing:0.422px;white-space:nowrap;-webkit-text-stroke:0.12px #5c1c1c">Statistics</div>
<div style="left:40.5px;top:193px;font:15px/15px 'Liberation Serif',serif;color:#5c1c1c;letter-spacing:0.225px;white-space:nowrap;-webkit-text-stroke:0.12px #5c1c1c">Click Ranks</div>
<div style="left:56.0px;top:213px;font:15px/15px 'Liberation Serif',serif;color:#5c1c1c;letter-spacing:0.141px;white-space:nowrap;-webkit-text-stroke:0.12px #5c1c1c">Recruit</div>
<div style="left:43.5px;top:235px;font:15px/15px 'Liberation Serif',serif;color:#5c1c1c;letter-spacing:0.323px;white-space:nowrap;-webkit-text-stroke:0.12px #5c1c1c">Buddy List</div>
<div style="left:56.5px;top:260px;font:15px/15px 'Liberation Serif',serif;color:#5c1c1c;letter-spacing:0.134px;white-space:nowrap;-webkit-text-stroke:0.12px #5c1c1c">Logout</div>
<div style="left:22.5px;top:307px;font:11px/11px 'Liberation Sans';color:#fff;white-space:nowrap;letter-spacing:0.3px">Bored? Play <span style="color:#ff0000">Flash Games</span></div>
<div style="left:10px;top:332px;width:137px;height:97px;background:#330000;border:1px solid #ff0000;box-sizing:border-box"></div>
<div style="left:10px;top:345px;width:137px;height:2px;background:#ff0000"></div>
<div style="left:45.3px;top:335px;font:bold 11px/11px 'Liberation Sans',sans-serif;color:#ffff00;letter-spacing:0.945px;white-space:nowrap;-webkit-text-stroke:0.3px #ffff00;">Game Time</div>
<div style="left:11.7px;top:350px;font:bold 13px/13px 'Liberation Sans',sans-serif;color:#fff;letter-spacing:0.417px;white-space:nowrap;transform:scaleX(1.14);transform-origin:0 0;-webkit-text-stroke:0.3px #fff;">Era 7 will end in 1</div>
<div style="left:16.0px;top:366px;font:bold 13px/13px 'Liberation Sans',sans-serif;color:#fff;letter-spacing:0.519px;white-space:nowrap;transform:scaleX(1.14);transform-origin:0 0;-webkit-text-stroke:0.3px #fff;">month, 2 days, 2</div>
<div style="left:43.5px;top:382px;font:bold 13px/13px 'Liberation Sans',sans-serif;color:#fff;letter-spacing:0.396px;white-space:nowrap;transform:scaleX(1.14);transform-origin:0 0;-webkit-text-stroke:0.3px #fff;">hours, 46</div>
<div style="left:21.0px;top:398px;font:bold 13px/13px 'Liberation Sans',sans-serif;color:#fff;letter-spacing:0.480px;white-space:nowrap;transform:scaleX(1.14);transform-origin:0 0;-webkit-text-stroke:0.3px #fff;">minutes and 20</div>
<div style="left:49.0px;top:413px;font:bold 13px/13px 'Liberation Sans',sans-serif;color:#fff;letter-spacing:1.042px;white-space:nowrap;-webkit-text-stroke:0.3px #fff;">seconds</div>
<div style="left:10px;top:442px;width:137px;height:49px;background:#330000;border:1px solid #ff0000;box-sizing:border-box"></div>
<div style="left:10px;top:456px;width:137px;height:2px;background:#ff0000"></div>
<div style="left:42.5px;top:445px;font:bold 11px/11px 'Liberation Sans',sans-serif;color:#fff;letter-spacing:0.967px;white-space:nowrap;-webkit-text-stroke:0.3px #fff;">Server Time</div>
<div style="left:35.0px;top:459.5px;font:bold 13px/13px 'Liberation Sans',sans-serif;color:#fff;letter-spacing:1.087px;white-space:nowrap;transform:scaleX(1.14);transform-origin:0 0;-webkit-text-stroke:0.3px #fff;">2020-07-19</div>
<div style="left:44.9px;top:475.5px;font:bold 13px/13px 'Liberation Sans',sans-serif;color:#fff;letter-spacing:0.921px;white-space:nowrap;transform:scaleX(1.14);transform-origin:0 0;-webkit-text-stroke:0.3px #fff;">05:13:40</div>
<div style="left:10px;top:504px;width:137px;height:142px;background:#000"></div>
<div style="left:10px;top:504px;width:5px;height:142px;background:linear-gradient(90deg,#f4f4f4,#d8d8d8)"></div>
<div style="left:142px;top:504px;width:4px;height:142px;background:linear-gradient(90deg,#d0d0d0,#f0f0f0)"></div>
<div style="left:10px;top:504px;width:136px;height:1px;background:linear-gradient(90deg,#f0f0f0,#ffffff 40%,#bdbdbd 65%,#f0f0f0)"></div>
<div style="left:10px;top:661px;width:137px;height:143px;background:#000"></div>
<div style="left:10px;top:661px;width:5px;height:143px;background:linear-gradient(90deg,#f4f4f4,#d8d8d8)"></div>
<div style="left:142px;top:661px;width:4px;height:143px;background:linear-gradient(90deg,#d0d0d0,#f0f0f0)"></div>
<div style="left:17px;top:795px;width:123px;height:3px;background:repeating-linear-gradient(90deg,#7a1818 0 3px,#b06060 3px 4px,#8a2a2a 4px 7px,#c09090 7px 8px)"></div>
<div style="left:10px;top:798px;width:136px;height:6px;background:linear-gradient(90deg,#d8d8d8,#ffffff 15%,#ffffff 38%,#c8c8c8 50%,#bdbdbd 70%,#e0e0e0 90%,#c8c8c8)"></div>
<div style="left:1779px;top:153px;width:120px;height:600px;background:#efb300"></div>
<div style="left:1779px;top:158px;width:58px;height:79px;background:#0c0c24;border-radius:11px"></div>
<div style="left:1780.5px;top:159.5px;width:55px;height:76px;background:#ffff00;border-radius:10px"></div>
<div style="left:1783px;top:163px;width:51px;height:70px;background:#0c0c24;border-radius:7px"></div>
<div style="left:1784px;top:164px;width:49px;height:67px;border-radius:6px;overflow:hidden"><svg width="49" height="67" viewBox="0 0 49 67" style="position:absolute;left:0;top:0"><rect width="49" height="67" fill="#a87c58"/><rect width="49" height="18" fill="#6e4a30"/><rect x="26" y="0" width="12" height="10" fill="#e0c8a8"/><rect x="4" y="2" width="6" height="12" fill="#c8a888"/><rect x="40" y="2" width="6" height="14" fill="#b89878"/>
<rect y="18" width="49" height="4" fill="#e0c8a8"/><rect y="22" width="49" height="20" fill="#c09a78"/>
<ellipse cx="21" cy="14" rx="5.5" ry="7" fill="#5a2e18"/><path d="M12 26 Q20 20 30 24 L34 48 L14 50Z" fill="#e8dccc"/><path d="M2 30 Q6 24 13 26 L14 48 L4 50Z" fill="#6a3a22"/><path d="M30 26 Q36 30 34 40 L30 40Z" fill="#6a3a22"/>
<path d="M2 44 L47 40 L47 48 L4 52Z" fill="#2a2018"/><rect x="24" y="44" width="10" height="8" fill="#6a3a22"/><rect y="52" width="49" height="15" fill="#caa888"/><path d="M8 52 h14 v15 h-14z" fill="#e0ccb0"/></svg></div>
<div style="left:1839px;top:158px;width:58px;height:79px;background:#0c0c24;border-radius:11px"></div>
<div style="left:1840.5px;top:159.5px;width:55px;height:76px;background:#ffff00;border-radius:10px"></div>
<div style="left:1843px;top:163px;width:51px;height:70px;background:#0c0c24;border-radius:7px"></div>
<div style="left:1844px;top:164px;width:49px;height:67px;border-radius:6px;overflow:hidden"><svg width="49" height="67" viewBox="0 0 49 67" style="position:absolute;left:0;top:0"><rect width="49" height="67" fill="#b4e040"/><path d="M0 6 L14 16 L4 34Z" fill="#6a625c"/><path d="M49 6 L35 16 L45 34Z" fill="#6a625c"/><path d="M3 12 L11 18 L5 28Z" fill="#d07878"/><path d="M46 12 L38 18 L44 28Z" fill="#d07878"/>
<ellipse cx="24.5" cy="34" rx="21" ry="27" fill="#6e6866"/><path d="M14 6 Q24.5 2 35 6 L30 14 Q24.5 10 19 14Z" fill="#8a8480"/><ellipse cx="24.5" cy="50" rx="15" ry="11" fill="#a8a4a0"/><ellipse cx="24.5" cy="54" rx="10" ry="6" fill="#e4e0dc"/>
<ellipse cx="15.5" cy="28" rx="5.5" ry="6" fill="#f4f4f4"/><ellipse cx="33.5" cy="28" rx="5.5" ry="6" fill="#f4f4f4"/><circle cx="16.5" cy="28.5" r="3.6" fill="#3aa030"/><circle cx="32.5" cy="28.5" r="3.6" fill="#3aa030"/><circle cx="16.5" cy="28.5" r="1.6" fill="#101010"/><circle cx="32.5" cy="28.5" r="1.6" fill="#101010"/>
<path d="M21 39 Q24.5 37 28 39 L24.5 43Z" fill="#e89a9a"/><path d="M17 46 Q24.5 50 32 46" stroke="#403838" stroke-width="1" fill="none"/><rect x="17" y="61" width="15" height="6" fill="#4a4440"/></svg></div>
<div style="left:1779px;top:243px;width:58px;height:79px;background:#0c0c24;border-radius:11px"></div>
<div style="left:1780.5px;top:244.5px;width:55px;height:76px;background:#ffff00;border-radius:10px"></div>
<div style="left:1783px;top:248px;width:51px;height:70px;background:#0c0c24;border-radius:7px"></div>
<div style="left:1784px;top:249px;width:49px;height:67px;border-radius:6px;overflow:hidden"><svg width="49" height="67" viewBox="0 0 49 67" style="position:absolute;left:0;top:0"><rect width="49" height="67" fill="#5a4848"/><rect x="0" y="0" width="14" height="14" fill="#c87060"/><rect x="14" y="0" width="14" height="10" fill="#a89070"/><rect x="28" y="0" width="21" height="14" fill="#6a7890"/>
<rect x="0" y="14" width="12" height="20" fill="#7a5040"/><rect x="36" y="14" width="13" height="20" fill="#8a6a60"/><rect x="0" y="34" width="14" height="33" fill="#604038"/><rect x="34" y="34" width="15" height="33" fill="#9a7060"/><rect x="14" y="54" width="20" height="13" fill="#7080a0"/>
<text x="24" y="17" font-family="Liberation Sans" font-weight="bold" font-size="10" fill="#fff" text-anchor="middle" letter-spacing="-0.4">gRand</text><text x="26" y="27" font-family="Liberation Sans" font-weight="bold" font-size="10" fill="#fff" text-anchor="middle" letter-spacing="-0.4">theft</text><text x="23" y="37" font-family="Liberation Sans" font-weight="bold" font-size="10" fill="#fff" text-anchor="middle" letter-spacing="-0.4">auto</text>
<text x="24.5" y="49" font-family="Liberation Serif" font-style="italic" font-weight="bold" font-size="9" fill="#e0e0e0" stroke="#202020" stroke-width="0.5" text-anchor="middle" letter-spacing="-0.3">SanAndreas</text></svg></div>
<div style="left:1839px;top:243px;width:58px;height:79px;background:#0c0c24;border-radius:11px"></div>
<div style="left:1840.5px;top:244.5px;width:55px;height:76px;background:#ffff00;border-radius:10px"></div>
<div style="left:1843px;top:248px;width:51px;height:70px;background:#0c0c24;border-radius:7px"></div>
<div style="left:1844px;top:249px;width:49px;height:67px;border-radius:6px;overflow:hidden"><svg width="49" height="67" viewBox="0 0 49 67" style="position:absolute;left:0;top:0"><rect width="49" height="67" fill="#d8a820"/><rect x="0" y="0" width="49" height="30" fill="#c89818"/><rect x="20" y="0" width="9" height="42" fill="#f8e060"/><circle cx="10.5" cy="12" r="9.5" fill="#f8dc50"/><circle cx="38.5" cy="12" r="9.5" fill="#f8dc50"/>
<circle cx="10.5" cy="12" r="6" fill="#6a4810"/><circle cx="38.5" cy="12" r="6" fill="#6a4810"/><circle cx="10.5" cy="12" r="3.5" fill="#f0d040"/><circle cx="38.5" cy="12" r="3.5" fill="#f0d040"/><circle cx="10.5" cy="12" r="2" fill="#201000"/><circle cx="38.5" cy="12" r="2" fill="#201000"/>
<path d="M0 24 Q24 18 49 24 V32 Q24 26 0 32Z" fill="#f8e068"/><rect x="10" y="36" width="26" height="24" fill="#4a3408"/><path d="M12 38h4v12h-4zM18 38h4v12h-4zM24 38h4v12h-4zM30 38h4v12h-4zM13 53h6v4h-6zM21 53h6v4h-6z" fill="#f8e070"/>
<rect x="0" y="32" width="9" height="35" fill="#f0c838"/><rect x="10" y="60" width="26" height="7" fill="#e8c030"/><path d="M31 40 Q40 34 49 40 V67 H31Z" fill="#fbf6e8"/><text x="40.5" y="64" font-family="Liberation Sans" font-weight="bold" font-size="24" fill="#eaa81c" stroke="#7a4a08" stroke-width="0.7" text-anchor="middle">2</text></svg></div>
<div style="left:1779px;top:328px;width:58px;height:79px;background:#0c0c24;border-radius:11px"></div>
<div style="left:1780.5px;top:329.5px;width:55px;height:76px;background:#ffff00;border-radius:10px"></div>
<div style="left:1783px;top:333px;width:51px;height:70px;background:#0c0c24;border-radius:7px"></div>
<div style="left:1784px;top:334px;width:49px;height:67px;border-radius:6px;overflow:hidden"><svg width="49" height="67" viewBox="0 0 49 67" style="position:absolute;left:0;top:0"><rect width="49" height="67" fill="#5aa030"/><path d="M30 0 H49 V30 Q40 20 30 10Z" fill="#80b840"/><path d="M0 0 H34 Q46 14 44 32 L34 54 L0 56Z" fill="#9aa498"/><path d="M4 14 Q14 6 22 10 M8 22 Q12 18 18 20" stroke="#606860" stroke-width="0.8" fill="none"/>
<ellipse cx="27" cy="24" rx="9" ry="11" fill="#f8f0c8" stroke="#101010" stroke-width="1.3"/><circle cx="27" cy="23" r="1.5" fill="#101010"/><ellipse cx="5" cy="38" rx="6" ry="7" fill="#f8f0c8" stroke="#101010" stroke-width="1.1"/><circle cx="4" cy="38" r="1" fill="#101010"/>
<path d="M8 46 Q22 40 34 44 L32 60 Q20 64 12 58Z" fill="#5a2020"/><path d="M9 46 l2 5 l2-5 l2 5 l2-5 l2 5 l2-5 l2 5 l2-5 l2 5" fill="#f4f4f4" stroke="#101010" stroke-width="0.4"/>
<path d="M34 30 Q46 24 49 36 V46 Q40 40 36 44Z" fill="#808880"/><path d="M30 50 Q36 34 46 38 Q50 44 44 52 L36 60 H49 V67 H28Z" fill="#e87018" stroke="#601800" stroke-width="0.8"/></svg></div>
<div style="left:1839px;top:328px;width:58px;height:79px;background:#0c0c24;border-radius:11px"></div>
<div style="left:1840.5px;top:329.5px;width:55px;height:76px;background:#ffff00;border-radius:10px"></div>
<div style="left:1843px;top:333px;width:51px;height:70px;background:#0c0c24;border-radius:7px"></div>
<div style="left:1844px;top:334px;width:49px;height:67px;border-radius:6px;overflow:hidden"><svg width="49" height="67" viewBox="0 0 49 67" style="position:absolute;left:0;top:0"><rect width="49" height="67" fill="#fcf9e8"/><path d="M25 6 C14 6 3 42 3 52 C3 62 14 64 25 64 C36 64 47 62 47 52 C47 42 36 6 25 6Z" fill="#c8965c" stroke="#9a6a38" stroke-width="0.8"/>
<ellipse cx="19" cy="19" rx="4.3" ry="5" fill="#fff" stroke="#404040" stroke-width="0.8"/><ellipse cx="28.5" cy="19" rx="4.3" ry="5" fill="#fff" stroke="#404040" stroke-width="0.8"/><circle cx="19.5" cy="19.5" r="1.6" fill="#101010"/><circle cx="28" cy="19.5" r="1.6" fill="#101010"/>
<path d="M16 28 Q14 34 19 34" stroke="#6a4020" stroke-width="0.9" fill="none"/></svg></div>
<div style="left:1779px;top:413px;width:58px;height:79px;background:#0c0c24;border-radius:11px"></div>
<div style="left:1780.5px;top:414.5px;width:55px;height:76px;background:#ffff00;border-radius:10px"></div>
<div style="left:1783px;top:418px;width:51px;height:70px;background:#0c0c24;border-radius:7px"></div>
<div style="left:1784px;top:419px;width:49px;height:67px;border-radius:6px;overflow:hidden"><svg width="49" height="67" viewBox="0 0 49 67" style="position:absolute;left:0;top:0"><rect width="49" height="67" fill="#7068d0"/><rect x="2" y="4" width="5" height="30" fill="#5050a8"/><rect x="10" y="0" width="3" height="26" fill="#5a5ab8"/><rect x="0" y="36" width="18" height="31" fill="#8878c8"/>
<path d="M16 14 Q28 0 49 4 V22 H18Z" fill="#eae4dc"/><path d="M16 18 H49 V26 H18Z" fill="#d82828"/><ellipse cx="34" cy="40" rx="16" ry="18" fill="#eab07a"/><path d="M18 26 Q34 20 49 28 V36 Q34 30 20 36Z" fill="#6a3a1a"/>
<ellipse cx="28" cy="37" rx="2.6" ry="3" fill="#2a1808"/><ellipse cx="42" cy="36" rx="2.6" ry="3" fill="#2a1808"/><path d="M30 48 Q36 52 44 47" stroke="#7a3018" stroke-width="1.1" fill="none"/>
<rect x="2" y="30" width="14" height="34" rx="3" fill="#e82a88"/><rect x="3" y="22" width="12" height="10" rx="2" fill="#c8c8d0"/><rect x="14" y="56" width="35" height="11" fill="#c83030"/><rect x="20" y="56" width="12" height="11" fill="#f0eeea"/></svg></div>
<div style="left:1839px;top:413px;width:58px;height:79px;background:#0c0c24;border-radius:11px"></div>
<div style="left:1840.5px;top:414.5px;width:55px;height:76px;background:#ffff00;border-radius:10px"></div>
<div style="left:1843px;top:418px;width:51px;height:70px;background:#0c0c24;border-radius:7px"></div>
<div style="left:1844px;top:419px;width:49px;height:67px;border-radius:6px;overflow:hidden"><svg width="49" height="67" viewBox="0 0 49 67" style="position:absolute;left:0;top:0"><rect width="49" height="67" fill="#6cc8f0"/><rect width="49" height="20" fill="#58b8e8"/><path d="M0 67 L49 26 V67Z" fill="#58a028"/><path d="M6 67 L49 33 V67Z" fill="#7a5030"/>
<path d="M8 44 L32 16 L42 18 L40 26 L20 50Z" fill="#d42828"/><path d="M30 14 L36 8 L40 12Z" fill="#d42828"/><circle cx="18" cy="48" r="5.5" fill="#c8d0d8" stroke="#303030" stroke-width="1.3"/><circle cx="40" cy="26" r="5.5" fill="#c8d0d8" stroke="#303030" stroke-width="1.3"/>
<ellipse cx="12" cy="20" rx="5" ry="6" fill="#b0a090"/><path d="M2 54 l4 2 l-2 4 l5 1" stroke="#a0c0d8" stroke-width="2" fill="none"/></svg></div>
<div style="left:1779px;top:498px;width:58px;height:79px;background:#0c0c24;border-radius:11px"></div>
<div style="left:1780.5px;top:499.5px;width:55px;height:76px;background:#ffff00;border-radius:10px"></div>
<div style="left:1783px;top:503px;width:51px;height:70px;background:#0c0c24;border-radius:7px"></div>
<div style="left:1784px;top:504px;width:49px;height:67px;border-radius:6px;overflow:hidden"><svg width="49" height="67" viewBox="0 0 49 67" style="position:absolute;left:0;top:0"><rect width="49" height="67" fill="#8a6040"/><rect width="49" height="12" fill="#70b040"/><path d="M0 12h5v5h-5zM10 12h8v10h-8zM24 12h6v6h-6zM36 12h8v9h-8z" fill="#62a838"/><path d="M5 4h8v6h-8zM28 2h10v8h-10z" fill="#88c858"/>
<path d="M6 22h7v7h-7zM28 20h7v7h-7zM38 24h8v8h-8zM3 40h7v7h-7zM16 46h7v7h-7zM34 44h8v8h-8zM8 56h8v8h-8zM28 58h8v8h-8z" fill="#b48866"/><path d="M14 32h8v6h-8zM30 38h6v6h-6zM0 50h6v6h-6zM40 56h9v8h-9z" fill="#5a3a28"/><path d="M22 48h6v6h-6zM40 40h6v4h-6z" fill="#808080"/>
<rect x="0" y="25" width="49" height="10" fill="#3a3430" opacity="0.7"/><text x="24.5" y="33.5" font-family="Liberation Sans" font-weight="bold" font-size="9" fill="#f0f0f0" stroke="#303030" stroke-width="0.3" text-anchor="middle" letter-spacing="-0.5">MINECRAFT</text><rect x="12" y="36" width="25" height="4" fill="#4a4040"/></svg></div>
<div style="left:1839px;top:498px;width:58px;height:79px;background:#0c0c24;border-radius:11px"></div>
<div style="left:1840.5px;top:499.5px;width:55px;height:76px;background:#ffff00;border-radius:10px"></div>
<div style="left:1843px;top:503px;width:51px;height:70px;background:#0c0c24;border-radius:7px"></div>
<div style="left:1844px;top:504px;width:49px;height:67px;border-radius:6px;overflow:hidden"><svg width="49" height="67" viewBox="0 0 49 67" style="position:absolute;left:0;top:0"><rect width="49" height="67" fill="#ee1cbc"/><path d="M0 4 L16 16 L2 32Z" fill="#f8eeee"/><path d="M49 4 L33 16 L47 32Z" fill="#f8eeee"/><path d="M3 10 L12 18 L5 26Z" fill="#f0b0b8"/><path d="M46 10 L37 18 L44 26Z" fill="#f0b0b8"/>
<path d="M24.5 6 C8 6 2 24 4 40 C6 56 16 66 24.5 66 C33 66 43 56 45 40 C47 24 41 6 24.5 6Z" fill="#faf6f4"/><ellipse cx="15" cy="32" rx="5.5" ry="6" fill="#3a88c8"/><ellipse cx="34" cy="32" rx="5.5" ry="6" fill="#3a88c8"/><circle cx="15.5" cy="32.5" r="2.8" fill="#101830"/><circle cx="33.5" cy="32.5" r="2.8" fill="#101830"/><circle cx="16.5" cy="31" r="1" fill="#fff"/><circle cx="34.5" cy="31" r="1" fill="#fff"/>
<path d="M7 27 Q15 22 22 26 M27 26 Q34 22 42 27" stroke="#181818" stroke-width="1.6" fill="none"/><path d="M22 42 L27 42 L24.5 45Z" fill="#e89aa0"/><path d="M17 50 Q24.5 55 32 50" stroke="#a06060" stroke-width="0.9" fill="none"/></svg></div>
<div style="left:1779px;top:583px;width:58px;height:79px;background:#0c0c24;border-radius:11px"></div>
<div style="left:1780.5px;top:584.5px;width:55px;height:76px;background:#ffff00;border-radius:10px"></div>
<div style="left:1783px;top:588px;width:51px;height:70px;background:#0c0c24;border-radius:7px"></div>
<div style="left:1784px;top:589px;width:49px;height:67px;border-radius:6px;overflow:hidden"><svg width="49" height="67" viewBox="0 0 49 67" style="position:absolute;left:0;top:0"><rect width="49" height="67" fill="#78c4ec"/><rect x="24" width="25" height="67" fill="#a8dcf4"/><path d="M0 0 H14 Q18 30 30 62 L22 67 H0Z" fill="#2a5a98"/><path d="M8 0 Q12 30 28 62 L22 67 H0 V12Z" fill="#3a78b8"/>
<path d="M12 30 Q24 28 34 52 Q26 60 22 56 Q12 44 12 30Z" fill="#5a1818"/><path d="M13 32 l3 3 l1-4 l3 4 l1-4 l3 5 l1-4 l3 5 l1-4 l2 5 M19 54 l3-3 l2 4 l3-4 l2 4 l3-4" stroke="#fff" stroke-width="1.3" fill="none"/>
<path d="M32 4 Q46 2 44 18 L36 34 L30 30 L38 16Z" fill="#f4d0bc"/><path d="M22 18 L38 24" stroke="#f4d0bc" stroke-width="3"/><path d="M30 62 H49 V67 H28Z" fill="#f0f4f8"/></svg></div>
<div style="left:1839px;top:583px;width:58px;height:79px;background:#0c0c24;border-radius:11px"></div>
<div style="left:1840.5px;top:584.5px;width:55px;height:76px;background:#ffff00;border-radius:10px"></div>
<div style="left:1843px;top:588px;width:51px;height:70px;background:#0c0c24;border-radius:7px"></div>
<div style="left:1844px;top:589px;width:49px;height:67px;border-radius:6px;overflow:hidden"><svg width="49" height="67" viewBox="0 0 49 67" style="position:absolute;left:0;top:0"><rect width="49" height="67" fill="#b85a34"/><path d="M30 0 H49 V20Z" fill="#d07a50"/><ellipse cx="17" cy="24" rx="13" ry="18" fill="#2e8a20" transform="rotate(-25 17 24)"/><ellipse cx="17" cy="24" rx="9" ry="14" fill="#78c848" transform="rotate(-25 17 24)"/>
<ellipse cx="34" cy="48" rx="13" ry="16" fill="#3a9628" transform="rotate(-25 34 48)"/><ellipse cx="31" cy="45" rx="9" ry="10" fill="#d43a30" transform="rotate(-25 31 45)"/><path d="M12 60 L44 10 L47 13 L15 62Z" fill="#f4f4f4"/>
<path d="M36 2 l4 8 M40 32 l7 -3 M4 48 l5 4 M10 56 l-4 6" stroke="#c01818" stroke-width="2.2"/></svg></div>
<div style="left:1779px;top:668px;width:58px;height:79px;background:#0c0c24;border-radius:11px"></div>
<div style="left:1780.5px;top:669.5px;width:55px;height:76px;background:#ffff00;border-radius:10px"></div>
<div style="left:1783px;top:673px;width:51px;height:70px;background:#0c0c24;border-radius:7px"></div>
<div style="left:1784px;top:674px;width:49px;height:67px;border-radius:6px;overflow:hidden"><svg width="49" height="67" viewBox="0 0 49 67" style="position:absolute;left:0;top:0"><rect width="49" height="67" fill="#c0b4a0"/><rect width="49" height="7" fill="#f0d0a8"/><rect y="7" width="49" height="9" fill="#b0a490"/><path d="M0 14 H18 L22 26 H0Z" fill="#5a2c22"/><circle cx="9" cy="22" r="4.5" fill="#3a3a3a"/>
<path d="M18 34 Q34 20 49 26 V54 Q36 40 22 50Z" fill="#e8a818"/><path d="M22 26 Q36 20 44 34 Q34 44 24 40Z" fill="#3a3430"/><rect x="0" y="28" width="14" height="24" fill="#8a8070"/><rect x="0" y="52" width="49" height="15" fill="#b8b0a0"/>
<rect x="13" y="28" width="10" height="16" fill="#e4e0d8"/><circle cx="18" cy="25" r="3.2" fill="#4a2a18"/><rect x="13" y="44" width="10" height="21" fill="#2a2a3e"/><circle cx="43" cy="58" r="6" fill="#e0d8d0" stroke="#202020"/></svg></div>
<div style="left:1839px;top:668px;width:58px;height:79px;background:#0c0c24;border-radius:11px"></div>
<div style="left:1840.5px;top:669.5px;width:55px;height:76px;background:#ffff00;border-radius:10px"></div>
<div style="left:1843px;top:673px;width:51px;height:70px;background:#0c0c24;border-radius:7px"></div>
<div style="left:1844px;top:674px;width:49px;height:67px;border-radius:6px;overflow:hidden"><svg width="49" height="67" viewBox="0 0 49 67" style="position:absolute;left:0;top:0"><rect width="49" height="67" fill="#b83828"/><rect x="16" y="0" width="18" height="14" fill="#98b4a8"/><rect x="0" y="0" width="16" height="10" fill="#dce0ea"/><rect x="0" y="18" width="14" height="26" fill="#88a8d0"/><rect x="36" y="20" width="13" height="16" fill="#e8c0a8"/>
<rect x="16" y="52" width="18" height="15" fill="#a8c0dc"/><rect x="0" y="52" width="16" height="15" fill="#e4dcd4"/><rect x="34" y="46" width="15" height="21" fill="#a02c1c"/>
<text x="24.5" y="22" font-family="Liberation Sans" font-weight="bold" font-size="10" fill="#fff" stroke="#202020" stroke-width="0.3" text-anchor="middle" letter-spacing="-0.4">gRand</text><text x="27" y="33" font-family="Liberation Sans" font-weight="bold" font-size="10" fill="#fff" stroke="#202020" stroke-width="0.3" text-anchor="middle" letter-spacing="-0.4">theft</text><text x="24" y="44" font-family="Liberation Sans" font-weight="bold" font-size="10" fill="#fff" stroke="#202020" stroke-width="0.3" text-anchor="middle" letter-spacing="-0.4">auto III</text></svg></div>
<div style="left:1903px;top:103px;width:17px;height:937px;background:#f0f0f0"></div>
<div style="left:1905px;top:259px;width:13px;height:311px;background:#c1c1c1"></div>
<svg style="left:1906px;top:108px" width="11" height="7"><path d="M1 6L5.5 1L10 6Z" fill="#505050"/></svg>
<svg style="left:1906px;top:1027px" width="11" height="7"><path d="M1 1L5.5 6L10 1Z" fill="#505050"/></svg>
<div style="left:1833px;top:966px;width:70px;height:60px;background:#f9f9f9;border-radius:3px 0 0 3px;box-shadow:0 0 4px rgba(160,160,160,0.6)"></div>
<svg style="left:1849px;top:972px" width="38" height="38" viewBox="0 0 38 38">
<path d="M19 1 A18 18 0 0 0 1 19 H9 A10 10 0 0 1 19 9Z" fill="#4a90f0"/>
<path d="M4 1 L14 1 L10 10Z" fill="#4a90f0"/>
<path d="M19 1 A18 18 0 0 1 37 19 H29 A10 10 0 0 0 19 9Z" fill="#1c3aa9"/>
<path d="M37 4 V19 H26Z" fill="#1c3aa9"/>
<path d="M1 19 A18 18 0 0 0 32 31 L26 25 A10 10 0 0 1 9 19Z" fill="#bdbdbd"/>
<path d="M1 19 V34 L12 26Z" fill="#bdbdbd"/>
</svg>
<div style="left:1840px;top:1014px;font:8px/8px 'Liberation Sans';color:#555;white-space:nowrap">Privacy - &nbsp;Terms</div>
<div style="left:0px;top:0px;width:1920px;height:32px;background:#1c1c1c"></div>
<div style="left:0px;top:32px;width:1920px;height:71px;background:#3b3b3b"></div>
<div style="left:0px;top:101px;width:1920px;height:2px;background:#575757"></div>
<div style="left:245px;top:0px;width:238px;height:31px;background:#3b3b3b;border-radius:6px 6px 0 0"></div>
<div style="left:241px;top:27px;width:4px;height:4px;background:radial-gradient(circle at 0 0,#1c1c1c 4px,#3b3b3b 4px)"></div>
<div style="left:483px;top:27px;width:4px;height:4px;background:radial-gradient(circle at 100% 0,#1c1c1c 4px,#3b3b3b 4px)"></div>
<div style="left:17px;top:8px;width:17px;height:16px;background:#e8e8e8"></div>
<svg style="left:17px;top:8px" width="17" height="16"><path d="M1 1h3v4h-3zM1 6h3v4h-3zM1 11h3v4h-3z" fill="#e00000"/><path d="M7 2 L12 11 M13 2 L8 11 M7 13 l2 2 M11 13 l2 2" stroke="#8a8a8a" stroke-width="1.3" fill="none"/></svg>
<div style="left:256px;top:8px;width:17px;height:16px;background:#e8e8e8"></div>
<svg style="left:256px;top:8px" width="17" height="16"><path d="M1 1h3v4h-3zM1 6h3v4h-3zM1 11h3v4h-3z" fill="#e00000"/><path d="M7 2 L12 11 M13 2 L8 11 M7 13 l2 2 M11 13 l2 2" stroke="#8a8a8a" stroke-width="1.3" fill="none"/></svg>
<div style="left:44.2px;top:10px;font:12px/12px 'Liberation Sans',sans-serif;color:#dcdcdc;letter-spacing:-0.163px;white-space:nowrap;-webkit-text-stroke:0.2px #dcdcdc;">Kings of Chaos :: Battlefield</div>
<div style="left:283.5px;top:10px;font:12px/12px 'Liberation Sans',sans-serif;color:#ffffff;letter-spacing:-0.139px;white-space:nowrap;-webkit-text-stroke:0.2px #ffffff;">Kings of Chaos :: Armory</div>
<svg style="left:225px;top:11px" width="10" height="10"><path d="M1 1L9 9M9 1L1 9" stroke="#cfcfcf" stroke-width="1.2"/></svg>
<svg style="left:464px;top:11px" width="10" height="10"><path d="M1 1L9 9M9 1L1 9" stroke="#e6e6e6" stroke-width="1.2"/></svg>
<svg style="left:704px;top:11px" width="10" height="10"><path d="M1 1L9 9M9 1L1 9" stroke="#cfcfcf" stroke-width="1.2"/></svg>
<svg style="left:496px;top:7px" width="15" height="19"><path d="M1.5 1.5h8l3.5 3.5v12.5h-11.5z M9.5 1.5v3.5h3.5" stroke="#e0e0e0" stroke-width="1.1" fill="none"/></svg>
<div style="left:521px;top:8px;width:176px;height:18px;overflow:hidden;-webkit-mask-image:linear-gradient(90deg,#000 88%,rgba(0,0,0,0.35) 96%,transparent 100%)"><div style="position:absolute;left:0;top:0;font:12px/12px 'Liberation Sans';color:#dcdcdc;white-space:nowrap;letter-spacing:-0.25px;padding-top:2px">Era 7 - LaCN, DEMK, Cerberus, Re</div></div>
<div style="left:724px;top:7px;width:1px;height:20px;background:#555"></div>
<svg style="left:733px;top:8px" width="16" height="16"><path d="M8 1V15M1 8H15" stroke="#dcdcdc" stroke-width="1.2"/></svg>
<div style="left:1799px;top:11px;width:11px;height:1px;background:#e0e0e0"></div>
<svg style="left:1844px;top:4px" width="14" height="14"><path d="M3.5 3.5V1.5H12.5V10.5H10.5 M1.5 3.5H10.5V12.5H1.5Z" stroke="#e0e0e0" stroke-width="1" fill="none"/></svg>
<svg style="left:1890px;top:4px" width="14" height="14"><path d="M1 1L13 13M13 1L1 13" stroke="#e8e8e8" stroke-width="1.2"/></svg>
<svg style="left:19px;top:43px" width="18" height="16"><path d="M1.5 8H17 M8 1.5L1.5 8L8 14.5" stroke="#e6e6e6" stroke-width="1.1" fill="none"/></svg>
<svg style="left:63px;top:43px" width="18" height="16"><path d="M1 8H16.5 M10 1.5L16.5 8L10 14.5" stroke="#8a8a8a" stroke-width="1.1" fill="none"/></svg>
<svg style="left:106px;top:40px" width="20" height="20"><path d="M12.3 3.4 A7.55 7.55 0 1 1 4.66 5.56 L7.5 3.2" stroke="#ececec" stroke-width="1.1" fill="none"/><path d="M4 3.1 H7.8 V7" stroke="#ececec" stroke-width="1.3" fill="none"/></svg>
<svg style="left:151px;top:42px" width="18" height="17"><path d="M1.5 8.5L9 1.5L16.5 8.5 M3.5 7V15.5H7V10.5H11V15.5H14.5V7" stroke="#e6e6e6" stroke-width="1.3" fill="none"/></svg>
<div style="left:188px;top:36px;width:1439px;height:30px;background:#2b2b2b;border-radius:4px"></div>
<svg style="left:202px;top:42px" width="15" height="18"><path d="M3.5 8V5.5A4 4 0 0 1 11.5 5.5V8" stroke="#e6e6e6" stroke-width="1.3" fill="none"/><rect x="1.5" y="8.5" width="12" height="8" stroke="#e6e6e6" stroke-width="1.3" fill="none"/></svg>
<div style="left:232px;top:42px;font:15px/15px 'Liberation Sans';white-space:nowrap;letter-spacing:0.62px;color:#fff">https<span style="color:#9a9a9a">://</span>www.kingsofchaos.com<span style="color:#9a9a9a">/armory.php</span></div>
<svg style="left:1561px;top:42px" width="20" height="20"><circle cx="6.5" cy="6.5" r="5" stroke="#dcdcdc" stroke-width="1.3" fill="none"/><path d="M10 10L18 18 M14 14l-2 2 M16.5 16.5l-2 2" stroke="#dcdcdc" stroke-width="1.3"/></svg>
<svg style="left:1597px;top:42px" width="22" height="20"><path d="M9 1.5L11.2 6.8L16.7 7.2L12.5 10.8L13.8 16.2L9 13.3L4.2 16.2L5.5 10.8L1.3 7.2L6.8 6.8Z" stroke="#b0b0b0" stroke-width="1.1" fill="none"/><path d="M17 14V20M14 17H20" stroke="#b0b0b0" stroke-width="1.1"/></svg>
<svg style="left:1647px;top:43px" width="16" height="16"><path d="M4.7 0H11.3L16 4.7V11.3L11.3 16H4.7L0 11.3V4.7Z" fill="#a8a8a8"/><text x="8" y="11.2" font-family="Liberation Sans" font-weight="bold" font-size="7.5" fill="#f4f4f4" text-anchor="middle" letter-spacing="-0.3">ABP</text></svg>
<svg style="left:1690px;top:42px" width="24" height="22"><rect x="1" y="1" width="16" height="16" rx="3" stroke="#f0f0f0" stroke-width="1.3" fill="#000"/><circle cx="5" cy="13" r="2" stroke="#f0f0f0" fill="none"/><rect x="10" y="10" width="12" height="12" rx="2" fill="#e02020"/><text x="16" y="20" font-family="Liberation Sans" font-weight="bold" font-size="10" fill="#fff" text-anchor="middle">1</text></svg>
<div style="left:1727px;top:43px;width:1px;height:16px;background:#5e5e5e"></div>
<svg style="left:1747px;top:42px" width="19" height="18"><path d="M11.3 6.8 L9.3 1.5 L7.1 6.8 L1.5 7.2 L5.8 10.8 L4.3 16.3 L8.6 13.4" stroke="#ececec" stroke-width="1.1" fill="none" stroke-linejoin="miter"/><path d="M10.6 7.5 H17.3 M11.2 10.5 H17.3 M10.3 13.5 H17.3" stroke="#ececec" stroke-width="1.2"/></svg>
<svg style="left:1792px;top:43px" width="18" height="18"><path d="M3.6 14.8 L1.2 4 L11.6 1.6 L12.3 4.8" stroke="#ececec" stroke-width="1.1" fill="none"/><rect x="5.5" y="5.5" width="11" height="11" stroke="#ececec" stroke-width="1.2" fill="#3b3b3b"/><path d="M11 8 V14 M8 11 H14" stroke="#ececec" stroke-width="1.2"/></svg>
<svg style="left:1834px;top:39px" width="24" height="24"><defs><clipPath id="pc"><circle cx="12" cy="12" r="11.5"/></clipPath></defs><circle cx="12" cy="12" r="11.5" fill="#c9c9c9"/><g clip-path="url(#pc)"><circle cx="12" cy="9" r="4.3" fill="#8c8c8c"/><ellipse cx="12" cy="22" rx="8.5" ry="6" fill="#8c8c8c"/></g></svg>
<div style="left:1885px;top:50px;width:2px;height:2px;background:#e6e6e6"></div>
<div style="left:1891px;top:50px;width:2px;height:2px;background:#e6e6e6"></div>
<div style="left:1897px;top:50px;width:2px;height:2px;background:#e6e6e6"></div>
<div style="left:4px;top:70px;width:1886px;height:26px;background:#000"></div>
<svg style="left:1889px;top:77px" width="8" height="14"><path d="M1.5 1L7 7L1.5 13" stroke="#d0d0d0" stroke-width="1.2" fill="none"/></svg>
<div style="left:0px;top:1040px;width:1920px;height:40px;background:linear-gradient(90deg,#1a1f22 0%,#1d2022 30%,#1f2527 45%,#212526 58%,#242424 66%,#2a2321 76%,#272325 81%,#202328 88%,#1e2226 100%)"></div>
<svg style="left:16px;top:1052px" width="17" height="17"><path d="M0 0H7.6V7.6H0Z M8.6 0H16.4V7.6H8.6Z M0 8.6H7.6V16.2H0Z M8.6 8.6H16.4V16.2H8.6Z" fill="#fff"/></svg>
<div style="left:48px;top:1040px;width:344px;height:40px;background:#333333;border:1px solid #5e5e5e;box-sizing:border-box"></div>
<svg style="left:59px;top:1051px" width="18" height="18"><circle cx="11" cy="7" r="5.3" stroke="#dcdcdc" stroke-width="1.3" fill="none"/><path d="M7.2 10.8L1 17" stroke="#dcdcdc" stroke-width="1.4"/></svg>
<div style="left:88.5px;top:1053px;font:15px/15px 'Liberation Sans';color:#d2d2d2;white-space:nowrap;letter-spacing:-0.25px">Type here to search</div>
<svg style="left:407px;top:1051px" width="18" height="17"><path d="M1 1.5H12 M1 15.5H12 M3 4.5H12V12.5H3Z" stroke="#fff" stroke-width="1.3" fill="none"/><rect x="14" y="3" width="3" height="3" fill="#fff"/><path d="M15.5 7V15" stroke="#fff" stroke-width="1.3"/></svg>
<div style="left:443px;top:1040px;width:48px;height:40px;background:#3d3d3d"></div>
<div style="left:443px;top:1078px;width:48px;height:2px;background:#76b9ed"></div>
<svg style="left:455px;top:1048px" width="24" height="24"><defs><linearGradient id="eg" x1="0" y1="0" x2="1" y2="1"><stop offset="0" stop-color="#35c1f1"/><stop offset="0.5" stop-color="#1f8fd8"/><stop offset="1" stop-color="#0c59a4"/></linearGradient><linearGradient id="eg2" x1="0" y1="0" x2="1" y2="0"><stop offset="0" stop-color="#1fa8e0"/><stop offset="1" stop-color="#6ad84a"/></linearGradient></defs>
<circle cx="12" cy="12" r="11.5" fill="url(#eg)"/><path d="M3 9 C5 1 19 0 22.5 9 C23 13 19 15 15 14 C17 11 15 8 11 8 C7 8 5 11 6 14 C4 13 3 11 3 9Z" fill="url(#eg2)"/><ellipse cx="13" cy="14" rx="4" ry="3" fill="#0f4d8a"/></svg>
<svg style="left:504px;top:1050px" width="24" height="20"><path d="M1 2.5H9L11 4.5H23V19H1Z" fill="#f0b429"/><path d="M1 6H23V19H1Z" fill="#ffd35b"/><path d="M8 12H16V19H13V15H11V19H8Z" fill="#3a96dd"/></svg>
<svg style="left:553px;top:1047px" width="24" height="25"><path d="M8 7V4A4 4 0 0 1 16 4V7" stroke="#e8e8e8" stroke-width="1.4" fill="none"/><path d="M1 7H23V22A2 2 0 0 1 21 24H3A2 2 0 0 1 1 22Z" fill="#fff"/><rect x="6" y="11" width="5.5" height="5" fill="#f35325"/><rect x="12.5" y="11" width="5.5" height="5" fill="#81bc06"/><rect x="6" y="17" width="5.5" height="5" fill="#05a6f0"/><rect x="12.5" y="17" width="5.5" height="5" fill="#ffba08"/></svg>
<svg style="left:602px;top:1048px" width="25" height="24"><path d="M1 9L12.5 1L24 9V24H1Z" fill="#0a6cc4"/><path d="M3 8H22L12.5 15Z" fill="#e6e6e6"/><path d="M1 9L12.5 17L24 9V24H1Z" fill="#2ea6ee"/></svg>
<svg style="left:651px;top:1048px" width="24" height="24"><circle cx="12" cy="12" r="12" fill="#1f7cf0"/><path d="M12 4A8 8 0 1 0 20 12 M12 7A5 5 0 1 1 7 12 M12 10A2 2 0 1 0 14 12" stroke="#fff" stroke-width="1.6" fill="none"/></svg>
<div style="left:643px;top:1078px;width:40px;height:2px;background:#76b9ed"></div>
<svg style="left:1693px;top:1055px" width="15" height="9"><path d="M1 8L7.5 1.5L14 8" stroke="#fff" stroke-width="1.3" fill="none"/></svg>
<svg style="left:1717px;top:1052px" width="17" height="16"><path d="M1 15A14 14 0 0 1 15 1 M4 15A11 11 0 0 1 15 4 M7 15A8 8 0 0 1 15 7 M10 15A5 5 0 0 1 15 10" stroke="#fff" stroke-width="1.1" fill="none"/><circle cx="14" cy="14" r="1.5" fill="#fff"/></svg>
<svg style="left:1740px;top:1052px" width="18" height="16"><path d="M1 5.5H4.5L9 1.5V14.5L4.5 10.5H1Z" stroke="#fff" stroke-width="1.1" fill="none"/><path d="M11.5 5.5A3 3 0 0 1 11.5 10.5 M13.5 3.5A6 6 0 0 1 13.5 12.5 M15.5 1.5A9 9 0 0 1 15.5 14.5" stroke="#fff" stroke-width="1.1" fill="none"/></svg>
<div style="left:1767.5px;top:1055px;font:12.5px/13px 'Liberation Sans';color:#fff;letter-spacing:-0.3px;transform:scaleX(0.87);transform-origin:0 0">ENG</div>
<div style="left:1811.5px;top:1045px;font:12px/13px 'Liberation Sans';color:#fff;letter-spacing:-0.1px">5:14 pm</div>
<div style="left:1804px;top:1062px;font:12px/13px 'Liberation Sans';color:#fff;letter-spacing:-0.4px">19/07/2020</div>
<svg style="left:1877px;top:1052px" width="18" height="17"><path d="M1 1H17V13H9L5.5 16V13H1Z" fill="#fff"/><path d="M4 4.5H14M4 7.5H14M4 10.5H10" stroke="#1e2226" stroke-width="1.2"/></svg>
<div style="left:1914px;top:1040px;width:1px;height:40px;background:#5a5d60"></div>
</body></html>
